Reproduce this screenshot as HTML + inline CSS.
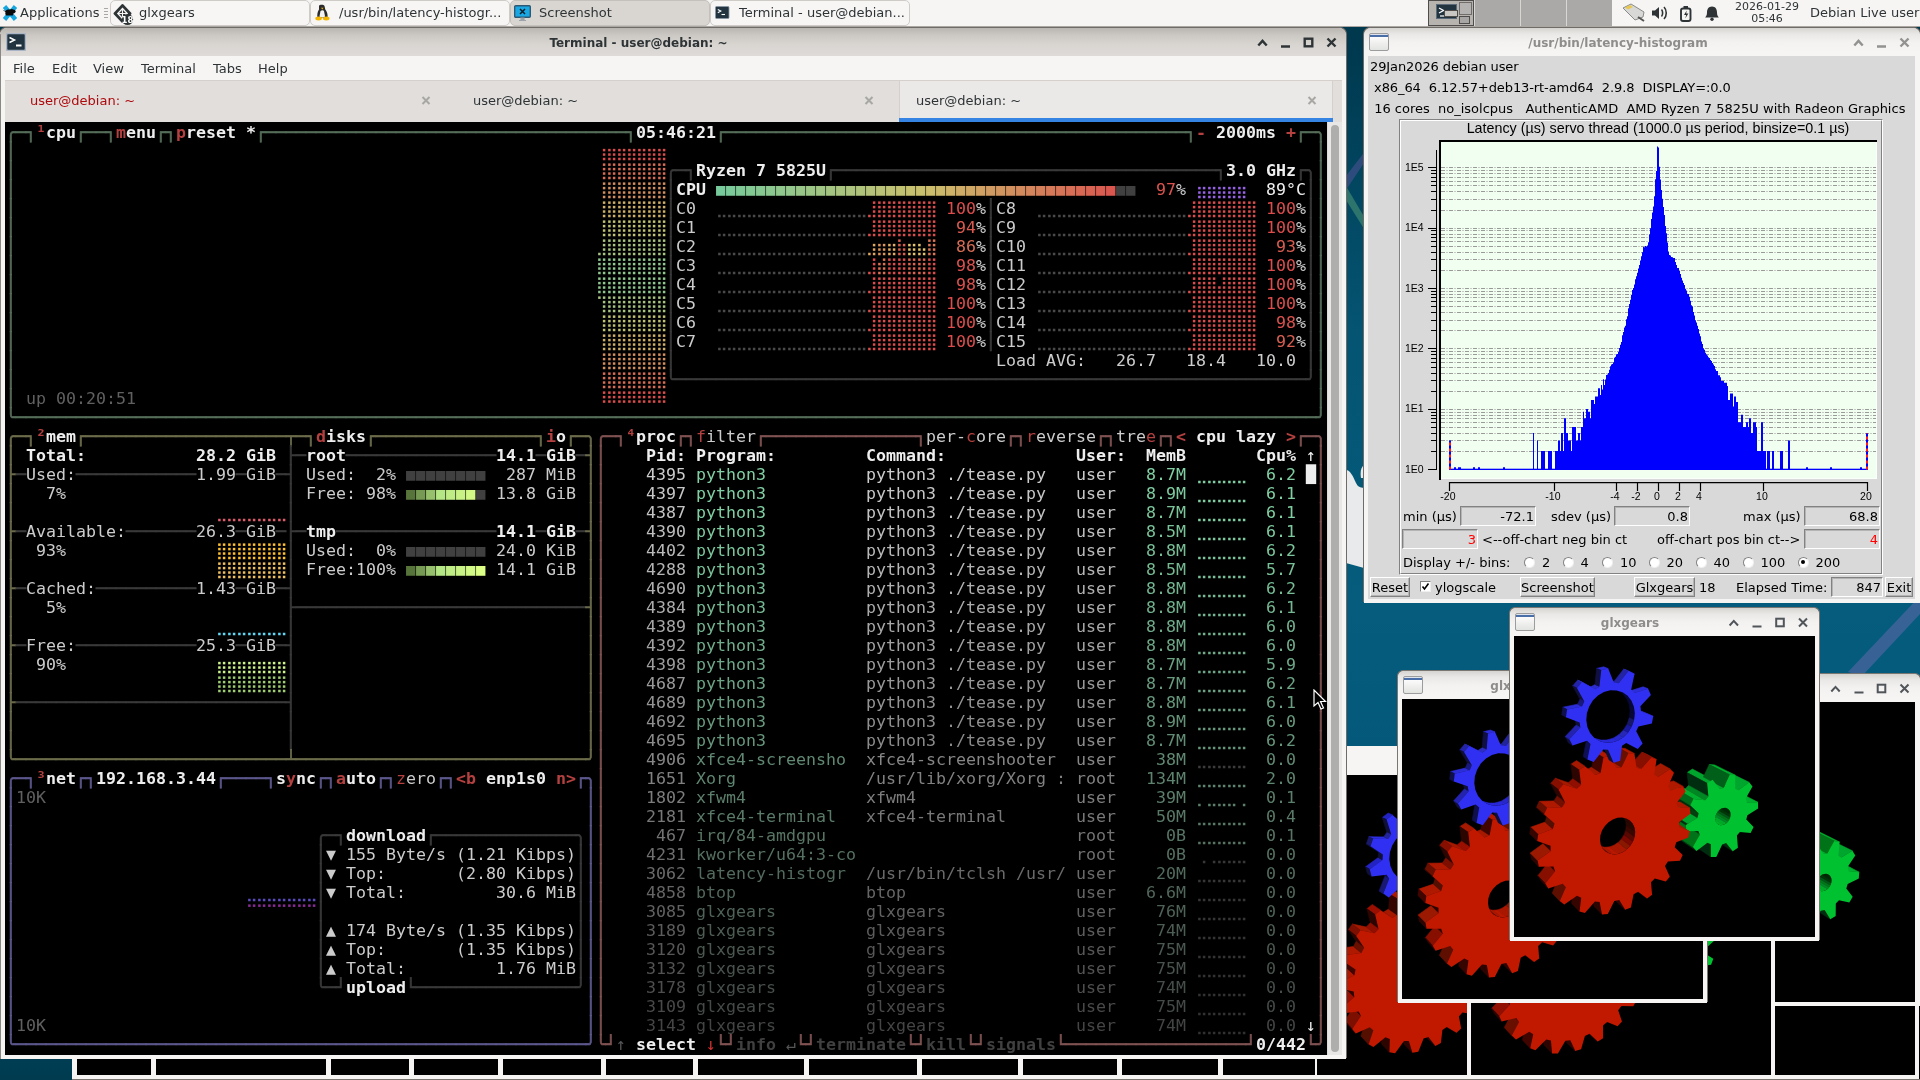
<!DOCTYPE html>
<html><head><meta charset="utf-8"><title>desktop</title><style>
html,body{margin:0;padding:0}
body{width:1920px;height:1080px;overflow:hidden;position:relative;background:#05587a;font:13px/16px "DejaVu Sans","Liberation Sans",sans-serif;color:#2e3436}
div,span,b,svg{box-sizing:border-box}
#all{position:absolute;left:0;top:0;width:1920px;height:1080px;will-change:transform}
.a,.a>*{position:absolute}
.t{white-space:pre;position:absolute}
#desk{left:0;top:0;width:1920px;height:1080px;background:linear-gradient(180deg,#00374c 0,#003a50 60px,#045472 330px,#055c7c 600px,#04597a 760px,#003b50 1080px)}
#panel{left:0;top:0;width:1920px;height:27px;background:#f6f5f4;border-bottom:1px solid #aaa6a2}
.tb{top:0;height:26px;border:1px solid #cfccc8;border-radius:5px;background:#f7f6f5}
.tb.act{background:#d9d6d2;border-color:#c4c1bc}
.tb .t{top:4px;font-size:13px}
.win{background:#f6f5f4;border-radius:7px 7px 0 0;overflow:hidden;box-shadow:-1px -1px 0 #6f6b67,1px -1px 0 #6f6b67}
.tbar{left:0;top:0;right:0;height:28px;background:linear-gradient(180deg,#b9b6b1 0,#cbc8c4 7px,#d8d5d1 16px,#dddad7 28px)}
.ttl{left:0;right:0;top:7px;text-align:center;font-weight:bold;font-size:12px;color:#2e3436;white-space:pre}
.ttl.in{color:#8e8d8b}
.term{left:5px;top:94px;width:1322px;height:933px;background:#000}
#term{left:1px;top:0;will-change:transform;font:16.61px/19px "DejaVu Sans Mono","Liberation Mono",monospace;color:#ccc;white-space:pre}
.tr{position:absolute;left:0;height:19px;white-space:pre}
.tr b{font-weight:bold}
.tr u{text-decoration:none;-webkit-text-stroke:.65px}
.mg{position:absolute;height:13px;background:repeating-linear-gradient(90deg,transparent 0,transparent 9px,rgba(0,0,0,.55) 9px,rgba(0,0,0,.55) 10px)}
#dots{left:1px;top:1px}
.tk{font-size:13px;color:#000;white-space:pre;position:absolute;line-height:16px}
.ent{position:absolute;background:#d9d9d9;border:1px solid;border-color:#828282 #fff #fff #828282;box-shadow:inset 1px 1px 0 #b4b4b4;height:20px;text-align:right;padding:2px 1px 0 0;font-size:13px;color:#000;line-height:16px}
.btn{position:absolute;background:#d9d9d9;border:1px solid;border-color:#fff #828282 #828282 #fff;box-shadow:inset -1px -1px 0 #b4b4b4;height:20px;font-size:13px;color:#000;line-height:16px;padding-top:2px;text-align:center}
.rad{position:absolute;width:11px;height:11px;border-radius:50%;background:#fff;border:1px solid;border-color:#828282 #efefef #efefef #828282}
.ax{font:10.500px "Liberation Sans",sans-serif;fill:#000}
.ct{font:14.3px "Liberation Sans",sans-serif;fill:#000}
.gw{background:#f6f5f4;border-radius:6px 6px 0 0;box-shadow:-1px -1px 0 #7a7672,1px -1px 0 #7a7672;overflow:hidden}
.gw .tbar{height:27px;background:linear-gradient(180deg,#d6d4d1 0,#e9e8e6 6px,#f3f2f1 14px,#f6f5f4 24px)}
.gl{position:absolute;background:#000}
.wi{position:absolute;width:20px;height:18px;border:1px solid #9a9c9e;border-radius:2px;background:linear-gradient(180deg,#dfe3ea 0,#dfe3ea 1px,#4a6ea8 1px,#4a6ea8 3px,#fbfbfb 3px,#e2e4e0 100%)}
</style></head><body><div id="all">
<div id="desk" class="a"></div>
<svg class="a" style="left:0;top:0" width="1920" height="1080"><path d="M1346 176L1366 150L1366 160L1346 190Z" fill="#40508a" opacity=".7"/><path d="M1346 186L1366 220L1366 232L1346 200Z" fill="#3f8870" opacity=".7"/><path d="M1346 470C1350 470 1353 476 1356 483C1358 487 1360 487.500 1364 488L1364 568L1346 563ZM1361 478C1360 472 1361 467 1364 465L1364 478Z" fill="#e8eaec"/><path d="M1920 596L1920 614L1862 676L1848 672Z" fill="#5a68a8" opacity=".6"/></svg>
<div class="a" style="left:72px;top:1059px;width:1280px;height:21px;background:#000"></div><div class="a" style="left:72px;top:1059px;width:5px;height:19px;background:#f6f5f4"></div><div class="a" style="left:151px;top:1059px;width:5px;height:19px;background:#f6f5f4"></div><div class="a" style="left:326px;top:1059px;width:5px;height:19px;background:#f6f5f4"></div><div class="a" style="left:409px;top:1059px;width:5px;height:19px;background:#f6f5f4"></div><div class="a" style="left:498px;top:1059px;width:5px;height:19px;background:#f6f5f4"></div><div class="a" style="left:601px;top:1059px;width:5px;height:19px;background:#f6f5f4"></div><div class="a" style="left:693px;top:1059px;width:5px;height:19px;background:#f6f5f4"></div><div class="a" style="left:804px;top:1059px;width:5px;height:19px;background:#f6f5f4"></div><div class="a" style="left:917px;top:1059px;width:5px;height:19px;background:#f6f5f4"></div><div class="a" style="left:1018px;top:1059px;width:5px;height:19px;background:#f6f5f4"></div><div class="a" style="left:1117px;top:1059px;width:5px;height:19px;background:#f6f5f4"></div><div class="a" style="left:1218px;top:1059px;width:5px;height:19px;background:#f6f5f4"></div><div class="a" style="left:1315px;top:1059px;width:5px;height:19px;background:#f6f5f4"></div><div class="a" style="left:72px;top:1075px;width:1275px;height:4px;background:#f6f5f4"></div><div class="a" style="left:72px;top:1079px;width:1275px;height:1px;background:#77736f"></div>
<div class="a" style="left:1340px;top:746px;width:140px;height:29px;background:#f6f5f4"></div>
<div class="a" style="left:1317px;top:775px;width:300px;height:300px;background:#000;overflow:hidden"><svg class="gl" width="300" height="300" viewBox="0 0 300 300"><path d="M244.0 174.1L233.8 171.6L213.2 160.4L223.2 162.9ZM227.8 141.2L222.8 139.5L202.0 129.2L206.9 130.9ZM195.3 159.6L184.6 155.6L164.9 144.4L175.4 148.5Z" fill="#00a52d" stroke="#00a52d" stroke-width=".6"/><path d="M239.3 151.7L228.1 157.2L207.4 146.4L218.4 141.2ZM214.8 151.3L210.9 151.6L190.5 140.8L194.4 140.6ZM205.9 140.5L200.2 142.9L179.9 132.3L185.5 130.1ZM185.0 175.9L172.7 180.5L153.5 168.5L165.4 164.1Z" fill="#00af2d" stroke="#00af2d" stroke-width=".6"/><path d="M222.8 139.5L214.8 151.3L194.4 140.6L202.0 129.2ZM184.6 155.6L180.5 161.2L160.9 149.9L164.9 144.4Z" fill="#007d23" stroke="#007d23" stroke-width=".6"/><path d="M200.2 142.9L199.0 156.7L178.9 145.6L179.9 132.3ZM180.5 161.2L186.8 171.4L167.1 159.8L160.9 149.9ZM172.7 180.5L171.9 187.2L152.8 174.9L153.5 168.5ZM183.2 189.6L184.0 193.8L164.6 181.4L163.9 177.3ZM175.1 205.1L177.9 209.9L158.8 197.0L156.0 192.3ZM189.6 204.0L192.5 206.2L173.1 193.5L170.2 191.3ZM207.1 208.6L211.9 218.7L192.1 205.8L187.4 196.0Z" fill="#002d0f" stroke="#002d0f" stroke-width=".6"/><path d="M199.0 156.7L195.3 159.6L175.4 148.5L178.9 145.6Z" fill="#009b23" stroke="#009b23" stroke-width=".6"/><path d="M186.8 171.4L185.0 175.9L165.4 164.1L167.1 159.8Z" fill="#005f19" stroke="#005f19" stroke-width=".6"/><path d="M184.0 193.8L175.1 205.1L156.0 192.3L164.6 181.4Z" fill="#008723" stroke="#008723" stroke-width=".6"/><path d="M192.5 206.2L190.3 219.4L171.0 206.3L173.1 193.5Z" fill="#00370f" stroke="#00370f" stroke-width=".6"/><clipPath id="hc1"><path d="M216.6 178.7L216.4 176.6L215.7 174.7L214.5 173.2L213.0 172.2L211.2 171.7L209.2 171.9L207.2 172.6L205.3 173.9L203.7 175.6L202.4 177.7L201.5 179.9L201.2 182.2L201.4 184.4L202.2 186.3L203.3 187.8L204.9 188.8L206.7 189.2L208.7 189.0L210.7 188.2L212.6 187.0L214.2 185.2L215.4 183.2L216.3 181.0Z"/></clipPath><g clip-path="url(#hc1)"><path d="M216.6 178.7L216.4 176.6L215.7 174.7L214.5 173.2L213.0 172.2L211.2 171.7L209.2 171.9L207.2 172.6L205.3 173.9L203.7 175.6L202.4 177.7L201.5 179.9L201.2 182.2L201.4 184.4L202.2 186.3L203.3 187.8L204.9 188.8L206.7 189.2L208.7 189.0L210.7 188.2L212.6 187.0L214.2 185.2L215.4 183.2L216.3 181.0Z" fill="#000"/><path d="M216.6 178.7L216.4 176.6L196.2 165.1L196.4 167.1ZM216.4 176.6L215.7 174.7L195.5 163.2L196.2 165.1ZM215.7 174.7L214.5 173.2L194.3 161.7L195.5 163.2ZM214.5 173.2L213.0 172.2L192.8 160.8L194.3 161.7Z" fill="#002808" stroke="#002808" stroke-width=".6"/><path d="M204.9 188.8L206.7 189.2L186.8 177.2L185.0 176.7ZM208.7 189.0L210.7 188.2L190.7 176.3L188.8 177.0ZM210.7 188.2L212.6 187.0L192.5 175.1L190.7 176.3Z" fill="#00a828" stroke="#00a828" stroke-width=".6"/><path d="M206.7 189.2L208.7 189.0L188.8 177.0L186.8 177.2Z" fill="#00b828" stroke="#00b828" stroke-width=".6"/><path d="M212.6 187.0L214.2 185.2L194.1 173.4L192.5 175.1Z" fill="#008828" stroke="#008828" stroke-width=".6"/><path d="M214.2 185.2L215.4 183.2L195.3 171.5L194.1 173.4Z" fill="#007818" stroke="#007818" stroke-width=".6"/><path d="M215.4 183.2L216.3 181.0L196.1 169.3L195.3 171.5Z" fill="#005818" stroke="#005818" stroke-width=".6"/><path d="M216.3 181.0L216.6 178.7L196.4 167.1L196.1 169.3Z" fill="#003808" stroke="#003808" stroke-width=".6"/></g><path d="M231.9 184.8L243.1 180.4L244.0 174.1L233.8 171.6L233.2 167.5L241.7 156.6L239.3 151.7L228.1 157.2L225.3 154.7L227.8 141.2L222.8 139.5L214.8 151.3L210.9 151.6L205.9 140.5L200.2 142.9L199.0 156.7L195.3 159.6L184.6 155.6L180.5 161.2L186.8 171.4L185.0 175.9L172.7 180.5L171.9 187.2L183.2 189.6L184.0 193.8L175.1 205.1L177.9 209.9L189.6 204.0L192.5 206.2L190.3 219.4L195.4 220.7L203.2 209.1L207.1 208.6L211.9 218.7L217.3 216.1L218.6 203.3L222.0 200.4L231.8 203.8L235.6 198.5L230.1 189.1ZM216.6 178.7L216.4 176.6L215.7 174.7L214.5 173.2L213.0 172.2L211.2 171.7L209.2 171.9L207.2 172.6L205.3 173.9L203.7 175.6L202.4 177.7L201.5 179.9L201.2 182.2L201.4 184.4L202.2 186.3L203.3 187.8L204.9 188.8L206.7 189.2L208.7 189.0L210.7 188.2L212.6 187.0L214.2 185.2L215.4 183.2L216.3 181.0Z" fill="#00c130" fill-rule="evenodd"/><path d="M174.5 164.8L162.2 165.7L152.6 159.8L164.7 159.0ZM165.8 144.3L153.3 149.4L143.7 143.8L156.0 138.9ZM121.2 131.5L116.3 131.0L107.1 125.6L112.0 126.1ZM112.7 117.3L106.5 117.7L97.4 112.5L103.5 112.1ZM100.8 132.2L95.6 133.5L86.8 127.9L91.9 126.7ZM87.7 122.1L81.5 124.6L72.8 119.2L78.9 116.7ZM44.3 178.1L29.3 180.1L21.6 173.4L36.4 171.5ZM37.4 200.2L23.0 206.9L15.6 199.6L29.7 193.1Z" fill="#af1900" stroke="#af1900" stroke-width=".6"/><path d="M150.7 128.5L139.3 137.5L129.8 132.1L141.1 123.3ZM63.7 135.2L58.1 139.6L49.9 133.8L55.3 129.4ZM37.3 221.9L25.2 232.4L17.8 224.7L29.7 214.4Z" fill="#9b0f00" stroke="#9b0f00" stroke-width=".6"/><path d="M139.3 137.5L135.1 135.4L125.7 130.0L129.8 132.1Z" fill="#9b1900" stroke="#9b1900" stroke-width=".6"/><path d="M135.9 120.8L130.4 119.2L121.0 114.0L126.4 115.7ZM80.2 139.9L75.2 142.8L66.7 137.0L71.6 134.1ZM57.4 158.2L43.4 155.3L35.4 149.0L49.3 152.0ZM176.4 187.9L165.3 184.8L155.8 178.6L166.7 181.7Z" fill="#a51900" stroke="#a51900" stroke-width=".6"/><path d="M130.4 119.2L121.2 131.5L112.0 126.1L121.0 114.0ZM43.4 155.3L39.2 161.1L31.3 154.8L35.4 149.0ZM43.9 240.9L35.2 253.9L27.7 245.8L36.2 233.1Z" fill="#7d0f00" stroke="#7d0f00" stroke-width=".6"/><path d="M106.5 117.7L100.8 132.2L91.9 126.7L97.4 112.5Z" fill="#5f0f00" stroke="#5f0f00" stroke-width=".6"/><path d="M81.5 124.6L80.2 139.9L71.6 134.1L72.8 119.2Z" fill="#370500" stroke="#370500" stroke-width=".6"/><path d="M58.1 139.6L61.5 153.9L53.3 147.8L49.9 133.8ZM39.2 161.1L47.1 172.8L39.1 166.3L31.3 154.8ZM27.0 186.8L38.5 194.6L30.7 187.6L19.4 179.9ZM23.0 206.9L22.8 213.5L15.4 206.1L15.6 199.6ZM36.7 216.6L37.3 221.9L29.7 214.4L29.0 209.2ZM25.2 232.4L27.0 238.2L19.6 230.4L17.8 224.7ZM41.7 236.5L43.9 240.9L36.2 233.1L34.0 228.8ZM35.2 253.9L38.8 258.4L31.3 250.3L27.7 245.8ZM52.7 252.2L56.3 255.3L48.5 247.4L45.0 244.3ZM51.6 269.3L56.5 272.0L48.8 263.8L43.9 261.0ZM72.8 263.9L72.4 277.3L64.5 269.1L64.8 255.9ZM91.8 266.0L95.4 277.8L87.2 269.7L83.6 258.1ZM111.4 261.9L118.4 270.9L109.8 263.1L102.9 254.1ZM129.8 252.0L139.5 257.7L130.6 250.2L121.0 244.6Z" fill="#2d0500" stroke="#2d0500" stroke-width=".6"/><path d="M61.5 153.9L57.4 158.2L49.3 152.0L53.3 147.8Z" fill="#910f00" stroke="#910f00" stroke-width=".6"/><path d="M47.1 172.8L44.3 178.1L36.4 171.5L39.1 166.3Z" fill="#690f00" stroke="#690f00" stroke-width=".6"/><path d="M29.3 180.1L27.0 186.8L19.4 179.9L21.6 173.4ZM56.3 255.3L51.6 269.3L43.9 261.0L48.5 247.4Z" fill="#550f00" stroke="#550f00" stroke-width=".6"/><path d="M38.5 194.6L37.4 200.2L29.7 193.1L30.7 187.6Z" fill="#410500" stroke="#410500" stroke-width=".6"/><clipPath id="hc2"><path d="M121.2 196.1L120.5 191.6L118.7 187.6L115.9 184.5L112.2 182.4L108.0 181.4L103.4 181.8L98.8 183.4L94.5 186.2L90.9 189.9L88.1 194.3L86.4 199.2L86.0 204.0L86.7 208.6L88.7 212.5L91.6 215.6L95.3 217.6L99.6 218.4L104.2 217.9L108.7 216.2L112.8 213.5L116.3 209.8L119.0 205.5L120.7 200.8Z"/></clipPath><g clip-path="url(#hc2)"><path d="M121.2 196.1L120.5 191.6L118.7 187.6L115.9 184.5L112.2 182.4L108.0 181.4L103.4 181.8L98.8 183.4L94.5 186.2L90.9 189.9L88.1 194.3L86.4 199.2L86.0 204.0L86.7 208.6L88.7 212.5L91.6 215.6L95.3 217.6L99.6 218.4L104.2 217.9L108.7 216.2L112.8 213.5L116.3 209.8L119.0 205.5L120.7 200.8Z" fill="#000"/><path d="M121.2 196.1L120.5 191.6L111.6 185.1L112.2 189.5ZM120.5 191.6L118.7 187.6L109.8 181.2L111.6 185.1ZM118.7 187.6L115.9 184.5L107.0 178.1L109.8 181.2ZM115.9 184.5L112.2 182.4L103.4 176.0L107.0 178.1Z" fill="#280800" stroke="#280800" stroke-width=".6"/><path d="M95.3 217.6L99.6 218.4L91.1 211.3L86.8 210.5ZM104.2 217.9L108.7 216.2L100.0 209.2L95.6 210.9ZM108.7 216.2L112.8 213.5L104.1 206.6L100.0 209.2Z" fill="#a81800" stroke="#a81800" stroke-width=".6"/><path d="M99.6 218.4L104.2 217.9L95.6 210.9L91.1 211.3Z" fill="#b81800" stroke="#b81800" stroke-width=".6"/><path d="M112.8 213.5L116.3 209.8L107.5 203.0L104.1 206.6Z" fill="#881800" stroke="#881800" stroke-width=".6"/><path d="M116.3 209.8L119.0 205.5L110.1 198.8L107.5 203.0Z" fill="#780800" stroke="#780800" stroke-width=".6"/><path d="M119.0 205.5L120.7 200.8L111.7 194.2L110.1 198.8Z" fill="#580800" stroke="#580800" stroke-width=".6"/><path d="M120.7 200.8L121.2 196.1L112.2 189.5L111.7 194.2Z" fill="#380800" stroke="#380800" stroke-width=".6"/></g><path d="M165.1 179.8L175.6 170.4L174.5 164.8L162.2 165.7L160.5 161.3L168.6 149.1L165.8 144.3L153.3 149.4L150.2 145.9L155.0 131.9L150.7 128.5L139.3 137.5L135.1 135.4L135.9 120.8L130.4 119.2L121.2 131.5L116.3 131.0L112.7 117.3L106.5 117.7L100.8 132.2L95.6 133.5L87.7 122.1L81.5 124.6L80.2 139.9L75.2 142.8L63.7 135.2L58.1 139.6L61.5 153.9L57.4 158.2L43.4 155.3L39.2 161.1L47.1 172.8L44.3 178.1L29.3 180.1L27.0 186.8L38.5 194.6L37.4 200.2L23.0 206.9L22.8 213.5L36.7 216.6L37.3 221.9L25.2 232.4L27.0 238.2L41.7 236.5L43.9 240.9L35.2 253.9L38.8 258.4L52.7 252.2L56.3 255.3L51.6 269.3L56.5 272.0L68.4 262.3L72.8 263.9L72.4 277.3L78.1 278.2L87.0 266.1L91.8 266.0L95.4 277.8L101.3 276.7L106.6 263.5L111.4 261.9L118.4 270.9L123.9 268.1L125.4 255.0L129.8 252.0L139.5 257.7L144.2 253.5L141.9 241.5L145.4 237.5L156.9 239.3L160.5 234.1L154.6 224.4L157.1 219.6L169.3 217.5L171.5 211.7L162.7 204.9L163.9 199.9L175.8 193.9L176.4 187.9L165.3 184.8ZM121.2 196.1L120.5 191.6L118.7 187.6L115.9 184.5L112.2 182.4L108.0 181.4L103.4 181.8L98.8 183.4L94.5 186.2L90.9 189.9L88.1 194.3L86.4 199.2L86.0 204.0L86.7 208.6L88.7 212.5L91.6 215.6L95.3 217.6L99.6 218.4L104.2 217.9L108.7 216.2L112.8 213.5L116.3 209.8L119.0 205.5L120.7 200.8Z" fill="#c11800" fill-rule="evenodd"/><path d="M137.4 60.9L123.8 62.2L119.0 60.1L132.6 58.9ZM103.1 32.2L96.1 32.3L91.5 30.5L98.4 30.5ZM71.1 64.1L56.1 63.8L51.8 61.7L66.7 61.9Z" fill="#2d2de1" stroke="#2d2de1" stroke-width=".6"/><path d="M122.0 39.0L110.4 49.1L105.7 47.2L117.2 37.1Z" fill="#2323b9" stroke="#2323b9" stroke-width=".6"/><path d="M110.4 49.1L106.0 47.6L101.3 45.6L105.7 47.2ZM91.5 47.9L86.7 49.7L82.2 47.7L86.9 46.0Z" fill="#2d2dd7" stroke="#2d2dd7" stroke-width=".6"/><path d="M96.1 32.3L91.5 47.9L86.9 46.0L91.5 30.5ZM56.1 63.8L53.5 71.3L49.3 69.1L51.8 61.7Z" fill="#191969" stroke="#191969" stroke-width=".6"/><path d="M75.6 39.9L69.6 44.6L65.2 42.6L71.2 38.0ZM65.5 84.9L52.7 94.3L48.5 91.8L61.2 82.6Z" fill="#2323c3" stroke="#2323c3" stroke-width=".6"/><path d="M69.6 44.6L74.2 59.6L69.8 57.5L65.2 42.6ZM53.5 71.3L65.8 79.6L61.5 77.2L49.3 69.1ZM65.8 79.6L65.5 84.9L61.2 82.6L61.5 77.2ZM52.7 94.3L54.6 101.4L50.4 98.8L48.5 91.8ZM69.5 99.7L72.2 103.8L67.9 101.2L65.2 97.2ZM66.4 118.6L71.8 122.5L67.6 119.7L62.1 115.9ZM88.0 113.3L91.0 127.6L86.6 124.9L83.6 110.7ZM106.8 110.4L116.9 119.0L112.3 116.3L102.2 107.9Z" fill="#0f0f37" stroke="#0f0f37" stroke-width=".6"/><path d="M74.2 59.6L71.1 64.1L66.7 61.9L69.8 57.5Z" fill="#23239b" stroke="#23239b" stroke-width=".6"/><path d="M72.2 103.8L66.4 118.6L62.1 115.9L67.9 101.2Z" fill="#191973" stroke="#191973" stroke-width=".6"/><clipPath id="hc3"><path d="M120.8 77.3L119.9 70.7L117.4 64.8L113.6 59.8L108.5 56.3L102.6 54.4L96.3 54.2L89.9 55.9L84.0 59.4L79.0 64.3L75.2 70.4L72.9 77.2L72.3 84.2L73.4 91.0L76.1 96.9L80.2 101.7L85.4 105.0L91.3 106.7L97.6 106.6L103.7 104.7L109.4 101.2L114.2 96.4L117.8 90.6L120.1 84.1Z"/></clipPath><g clip-path="url(#hc3)"><path d="M120.8 77.3L119.9 70.7L117.4 64.8L113.6 59.8L108.5 56.3L102.6 54.4L96.3 54.2L89.9 55.9L84.0 59.4L79.0 64.3L75.2 70.4L72.9 77.2L72.3 84.2L73.4 91.0L76.1 96.9L80.2 101.7L85.4 105.0L91.3 106.7L97.6 106.6L103.7 104.7L109.4 101.2L114.2 96.4L117.8 90.6L120.1 84.1Z" fill="#000"/><path d="M120.8 77.3L119.9 70.7L115.1 68.6L116.0 75.1ZM119.9 70.7L117.4 64.8L112.7 62.7L115.1 68.6ZM117.4 64.8L113.6 59.8L108.8 57.8L112.7 62.7ZM113.6 59.8L108.5 56.3L103.8 54.3L108.8 57.8ZM120.1 84.1L120.8 77.3L116.0 75.1L115.3 81.8Z" fill="#080838" stroke="#080838" stroke-width=".6"/><path d="M85.4 105.0L91.3 106.7L86.9 104.1L81.0 102.5ZM91.3 106.7L97.6 106.6L93.1 104.0L86.9 104.1ZM97.6 106.6L103.7 104.7L99.2 102.2L93.1 104.0Z" fill="#2828d8" stroke="#2828d8" stroke-width=".6"/><path d="M103.7 104.7L109.4 101.2L104.8 98.8L99.2 102.2Z" fill="#2828c8" stroke="#2828c8" stroke-width=".6"/><path d="M109.4 101.2L114.2 96.4L109.5 94.0L104.8 98.8Z" fill="#2828b8" stroke="#2828b8" stroke-width=".6"/><path d="M114.2 96.4L117.8 90.6L113.1 88.2L109.5 94.0Z" fill="#181898" stroke="#181898" stroke-width=".6"/><path d="M117.8 90.6L120.1 84.1L115.3 81.8L113.1 88.2Z" fill="#181868" stroke="#181868" stroke-width=".6"/></g><path d="M121.5 96.5L134.9 96.4L137.4 89.4L126.7 81.8L127.0 76.7L139.0 67.8L137.4 60.9L123.8 62.2L121.3 58.0L127.1 43.3L122.0 39.0L110.4 49.1L106.0 47.6L103.1 32.2L96.1 32.3L91.5 47.9L86.7 49.7L75.6 39.9L69.6 44.6L74.2 59.6L71.1 64.1L56.1 63.8L53.5 71.3L65.8 79.6L65.5 84.9L52.7 94.3L54.6 101.4L69.5 99.7L72.2 103.8L66.4 118.6L71.8 122.5L83.5 112.1L88.0 113.3L91.0 127.6L97.7 127.0L102.2 112.3L106.8 110.4L116.9 119.0L122.4 114.4L118.5 100.8ZM120.8 77.3L119.9 70.7L117.4 64.8L113.6 59.8L108.5 56.3L102.6 54.4L96.3 54.2L89.9 55.9L84.0 59.4L79.0 64.3L75.2 70.4L72.9 77.2L72.3 84.2L73.4 91.0L76.1 96.9L80.2 101.7L85.4 105.0L91.3 106.7L97.6 106.6L103.7 104.7L109.4 101.2L114.2 96.4L117.8 90.6L120.1 84.1Z" fill="#3030f2" fill-rule="evenodd"/></svg></div>
<div class="a" style="left:1340px;top:1075px;width:130px;height:4px;background:#f6f5f4"></div>
<div class="a" style="left:1773px;top:1004px;width:147px;height:76px;background:#000"></div><div class="a" style="left:1915px;top:1004px;width:4px;height:75px;background:#f6f5f4"></div><div class="a" style="left:1773px;top:1075px;width:146px;height:4px;background:#f6f5f4"></div><div class="a" style="left:1773px;top:1079px;width:147px;height:1px;background:#77736f"></div>
<div class="a gw" style="left:1611px;top:674px;width:309px;height:332px"><div class="tbar"></div><svg class="a" style="left:0;top:0" width="309" height="27"><path d="M220.3 17.5l4.2 -4.6l4.2 4.6" fill="none" stroke="#50555a" stroke-width="2.0"/><path d="M243.5 18.5h9" fill="none" stroke="#50555a" stroke-width="2.0"/><rect x="266.7" y="10.7" width="7.6" height="7.6" fill="none" stroke="#50555a" stroke-width="2.0"/><path d="M289.5 10.5l8 8m0 -8l-8 8" fill="none" stroke="#50555a" stroke-width="2.0"/></svg></div>
<div class="a" style="left:1615px;top:702px;width:300px;height:300px;background:#000;overflow:hidden"><svg class="gl" width="300" height="300" viewBox="0 0 300 300"><path d="M244.2 170.2L233.5 169.0L212.8 157.9L223.3 159.1ZM224.6 140.0L219.4 138.9L198.7 128.7L203.9 129.7ZM212.3 151.4L208.3 152.1L188.0 141.4L191.9 140.7ZM184.1 178.8L172.1 184.8L152.9 172.6L164.6 166.9Z" fill="#00af2d" stroke="#00af2d" stroke-width=".6"/><path d="M237.4 148.8L226.4 155.6L205.7 144.8L216.4 138.4ZM202.2 141.9L196.6 144.9L176.5 134.3L182.0 131.4ZM193.2 161.8L181.9 159.1L162.2 147.9L173.3 150.6Z" fill="#00a52d" stroke="#00a52d" stroke-width=".6"/><path d="M219.4 138.9L212.3 151.4L191.9 140.7L198.7 128.7ZM181.9 159.1L178.2 165.1L158.7 153.6L162.2 147.9Z" fill="#007319" stroke="#007319" stroke-width=".6"/><path d="M196.6 144.9L196.6 158.5L176.6 147.4L176.5 134.3ZM178.2 165.1L185.5 174.2L166.0 162.5L158.7 153.6ZM172.1 184.8L171.9 191.3L152.8 178.9L152.9 172.6ZM183.6 192.3L184.7 196.3L165.4 183.9L164.3 180.0ZM176.8 208.3L180.0 212.6L160.9 199.6L157.7 195.3ZM194.6 207.4L193.5 220.4L174.2 207.2L175.1 194.6ZM209.6 208.0L215.3 217.2L195.5 204.4L189.8 195.4Z" fill="#002d0f" stroke="#002d0f" stroke-width=".6"/><path d="M196.6 158.5L193.2 161.8L173.3 150.6L176.6 147.4Z" fill="#009123" stroke="#009123" stroke-width=".6"/><path d="M185.5 174.2L184.1 178.8L164.6 166.9L166.0 162.5Z" fill="#004b0f" stroke="#004b0f" stroke-width=".6"/><path d="M184.7 196.3L176.8 208.3L157.7 195.3L165.4 183.9Z" fill="#007d23" stroke="#007d23" stroke-width=".6"/><clipPath id="hc4"><path d="M216.6 178.7L216.4 176.6L215.7 174.7L214.5 173.2L213.0 172.2L211.2 171.7L209.2 171.9L207.2 172.6L205.3 173.9L203.7 175.6L202.4 177.7L201.5 179.9L201.2 182.2L201.4 184.4L202.2 186.3L203.3 187.8L204.9 188.8L206.7 189.2L208.7 189.0L210.7 188.2L212.6 187.0L214.2 185.2L215.4 183.2L216.3 181.0Z"/></clipPath><g clip-path="url(#hc4)"><path d="M216.6 178.7L216.4 176.6L215.7 174.7L214.5 173.2L213.0 172.2L211.2 171.7L209.2 171.9L207.2 172.6L205.3 173.9L203.7 175.6L202.4 177.7L201.5 179.9L201.2 182.2L201.4 184.4L202.2 186.3L203.3 187.8L204.9 188.8L206.7 189.2L208.7 189.0L210.7 188.2L212.6 187.0L214.2 185.2L215.4 183.2L216.3 181.0Z" fill="#000"/><path d="M216.6 178.7L216.4 176.6L196.2 165.1L196.4 167.1ZM216.4 176.6L215.7 174.7L195.5 163.2L196.2 165.1ZM215.7 174.7L214.5 173.2L194.3 161.7L195.5 163.2ZM214.5 173.2L213.0 172.2L192.8 160.8L194.3 161.7Z" fill="#002808" stroke="#002808" stroke-width=".6"/><path d="M204.9 188.8L206.7 189.2L186.8 177.2L185.0 176.7ZM208.7 189.0L210.7 188.2L190.7 176.3L188.8 177.0ZM210.7 188.2L212.6 187.0L192.5 175.1L190.7 176.3Z" fill="#00a828" stroke="#00a828" stroke-width=".6"/><path d="M206.7 189.2L208.7 189.0L188.8 177.0L186.8 177.2Z" fill="#00b828" stroke="#00b828" stroke-width=".6"/><path d="M212.6 187.0L214.2 185.2L194.1 173.4L192.5 175.1Z" fill="#008828" stroke="#008828" stroke-width=".6"/><path d="M214.2 185.2L215.4 183.2L195.3 171.5L194.1 173.4Z" fill="#007818" stroke="#007818" stroke-width=".6"/><path d="M215.4 183.2L216.3 181.0L196.1 169.3L195.3 171.5Z" fill="#005818" stroke="#005818" stroke-width=".6"/><path d="M216.3 181.0L216.6 178.7L196.4 167.1L196.1 169.3Z" fill="#003808" stroke="#003808" stroke-width=".6"/></g><path d="M232.7 182.0L243.8 176.4L244.2 170.2L233.5 169.0L232.6 165.0L240.3 153.4L237.4 148.8L226.4 155.6L223.4 153.5L224.6 140.0L219.4 138.9L212.3 151.4L208.3 152.1L202.2 141.9L196.6 144.9L196.6 158.5L193.2 161.8L181.9 159.1L178.2 165.1L185.5 174.2L184.1 178.8L172.1 184.8L171.9 191.3L183.6 192.3L184.7 196.3L176.8 208.3L180.0 212.6L191.4 205.5L194.6 207.4L193.5 220.4L198.8 221.0L205.7 208.8L209.6 208.0L215.3 217.2L220.7 214.1L220.8 201.5L224.0 198.3L234.3 200.5L237.7 194.8L231.3 186.4ZM216.6 178.7L216.4 176.6L215.7 174.7L214.5 173.2L213.0 172.2L211.2 171.7L209.2 171.9L207.2 172.6L205.3 173.9L203.7 175.6L202.4 177.7L201.5 179.9L201.2 182.2L201.4 184.4L202.2 186.3L203.3 187.8L204.9 188.8L206.7 189.2L208.7 189.0L210.7 188.2L212.6 187.0L214.2 185.2L215.4 183.2L216.3 181.0Z" fill="#00c130" fill-rule="evenodd"/><path d="M175.2 168.3L163.0 168.6L153.5 162.7L165.5 162.5ZM167.6 147.3L155.0 151.7L145.5 146.1L157.9 141.8ZM124.3 132.0L119.4 131.3L110.2 125.8L115.0 126.6ZM116.5 117.3L110.4 117.4L101.3 112.2L107.3 112.1ZM104.1 131.6L98.9 132.6L90.0 127.1L95.2 126.1ZM91.7 120.8L85.4 123.0L76.7 117.6L82.8 115.4ZM46.0 174.7L31.0 176.0L23.3 169.3L38.1 168.2ZM38.0 196.6L23.5 202.6L16.0 195.4L30.3 189.6Z" fill="#af1900" stroke="#af1900" stroke-width=".6"/><path d="M153.5 130.7L141.8 139.1L132.3 133.6L143.9 125.4ZM67.3 132.6L61.6 136.7L53.3 131.0L58.9 126.9Z" fill="#9b1900" stroke="#9b1900" stroke-width=".6"/><path d="M139.2 122.1L133.9 120.2L124.5 115.0L129.7 117.0ZM83.4 138.2L78.3 140.9L69.8 135.1L74.7 132.5ZM60.0 155.4L46.2 151.7L38.2 145.5L51.8 149.3ZM176.0 191.7L165.3 187.9L155.8 181.7L166.4 185.5Z" fill="#a51900" stroke="#a51900" stroke-width=".6"/><path d="M133.9 120.2L124.3 132.0L115.0 126.6L124.5 115.0ZM46.2 151.7L41.8 157.4L33.9 151.1L38.2 145.5Z" fill="#870f00" stroke="#870f00" stroke-width=".6"/><path d="M110.4 117.4L104.1 131.6L95.2 126.1L101.3 112.2ZM31.0 176.0L28.4 182.5L20.8 175.7L23.3 169.3ZM54.0 253.4L48.7 267.3L41.0 259.1L46.2 245.5Z" fill="#5f0f00" stroke="#5f0f00" stroke-width=".6"/><path d="M85.4 123.0L83.4 138.2L74.7 132.5L76.7 117.6ZM23.5 202.6L22.9 209.3L15.5 202.0L16.0 195.4Z" fill="#370500" stroke="#370500" stroke-width=".6"/><path d="M61.6 136.7L64.3 151.3L56.0 145.2L53.3 131.0ZM41.8 157.4L49.0 169.6L41.0 163.1L33.9 151.1ZM28.4 182.5L39.4 191.0L31.6 184.1L20.8 175.7ZM36.5 213.2L36.8 218.6L29.2 211.1L28.8 205.9ZM24.3 228.5L25.8 234.6L18.4 226.8L16.9 220.9ZM40.4 233.6L42.4 238.2L34.8 230.4L32.8 225.9ZM33.1 250.8L36.5 255.6L29.0 247.5L25.7 242.8ZM50.6 250.1L54.0 253.4L46.2 245.5L42.9 242.2ZM48.7 267.3L53.4 270.3L45.7 262.1L41.0 259.1ZM70.0 262.9L68.9 276.6L61.0 268.3L62.0 254.9ZM88.7 266.1L91.7 278.2L83.5 270.1L80.5 258.2ZM108.3 262.9L114.9 272.4L106.3 264.6L99.8 255.2ZM127.0 254.0L136.3 260.1L127.5 252.6L118.2 246.4Z" fill="#2d0500" stroke="#2d0500" stroke-width=".6"/><path d="M64.3 151.3L60.0 155.4L51.8 149.3L56.0 145.2Z" fill="#910f00" stroke="#910f00" stroke-width=".6"/><path d="M49.0 169.6L46.0 174.7L38.1 168.2L41.0 163.1Z" fill="#730f00" stroke="#730f00" stroke-width=".6"/><path d="M39.4 191.0L38.0 196.6L30.3 189.6L31.6 184.1Z" fill="#4b0500" stroke="#4b0500" stroke-width=".6"/><path d="M36.8 218.6L24.3 228.5L16.9 220.9L29.2 211.1Z" fill="#9b0f00" stroke="#9b0f00" stroke-width=".6"/><path d="M42.4 238.2L33.1 250.8L25.7 242.8L34.8 230.4Z" fill="#7d0f00" stroke="#7d0f00" stroke-width=".6"/><clipPath id="hc5"><path d="M121.2 196.1L120.5 191.6L118.7 187.6L115.9 184.5L112.2 182.4L108.0 181.4L103.4 181.8L98.8 183.4L94.5 186.2L90.9 189.9L88.1 194.3L86.4 199.2L86.0 204.0L86.7 208.6L88.7 212.5L91.6 215.6L95.3 217.6L99.6 218.4L104.2 217.9L108.7 216.2L112.8 213.5L116.3 209.8L119.0 205.5L120.7 200.8Z"/></clipPath><g clip-path="url(#hc5)"><path d="M121.2 196.1L120.5 191.6L118.7 187.6L115.9 184.5L112.2 182.4L108.0 181.4L103.4 181.8L98.8 183.4L94.5 186.2L90.9 189.9L88.1 194.3L86.4 199.2L86.0 204.0L86.7 208.6L88.7 212.5L91.6 215.6L95.3 217.6L99.6 218.4L104.2 217.9L108.7 216.2L112.8 213.5L116.3 209.8L119.0 205.5L120.7 200.8Z" fill="#000"/><path d="M121.2 196.1L120.5 191.6L111.6 185.1L112.2 189.5ZM120.5 191.6L118.7 187.6L109.8 181.2L111.6 185.1ZM118.7 187.6L115.9 184.5L107.0 178.1L109.8 181.2ZM115.9 184.5L112.2 182.4L103.4 176.0L107.0 178.1Z" fill="#280800" stroke="#280800" stroke-width=".6"/><path d="M95.3 217.6L99.6 218.4L91.1 211.3L86.8 210.5ZM104.2 217.9L108.7 216.2L100.0 209.2L95.6 210.9ZM108.7 216.2L112.8 213.5L104.1 206.6L100.0 209.2Z" fill="#a81800" stroke="#a81800" stroke-width=".6"/><path d="M99.6 218.4L104.2 217.9L95.6 210.9L91.1 211.3Z" fill="#b81800" stroke="#b81800" stroke-width=".6"/><path d="M112.8 213.5L116.3 209.8L107.5 203.0L104.1 206.6Z" fill="#881800" stroke="#881800" stroke-width=".6"/><path d="M116.3 209.8L119.0 205.5L110.1 198.8L107.5 203.0Z" fill="#780800" stroke="#780800" stroke-width=".6"/><path d="M119.0 205.5L120.7 200.8L111.7 194.2L110.1 198.8Z" fill="#580800" stroke="#580800" stroke-width=".6"/><path d="M120.7 200.8L121.2 196.1L112.2 189.5L111.7 194.2Z" fill="#380800" stroke="#380800" stroke-width=".6"/></g><path d="M165.3 183.0L176.1 174.0L175.2 168.3L163.0 168.6L161.6 164.1L170.2 152.2L167.6 147.3L155.0 151.7L152.2 148.1L157.6 134.3L153.5 130.7L141.8 139.1L137.8 136.7L139.2 122.1L133.9 120.2L124.3 132.0L119.4 131.3L116.5 117.3L110.4 117.4L104.1 131.6L98.9 132.6L91.7 120.8L85.4 123.0L83.4 138.2L78.3 140.9L67.3 132.6L61.6 136.7L64.3 151.3L60.0 155.4L46.2 151.7L41.8 157.4L49.0 169.6L46.0 174.7L31.0 176.0L28.4 182.5L39.4 191.0L38.0 196.6L23.5 202.6L22.9 209.3L36.5 213.2L36.8 218.6L24.3 228.5L25.8 234.6L40.4 233.6L42.4 238.2L33.1 250.8L36.5 255.6L50.6 250.1L54.0 253.4L48.7 267.3L53.4 270.3L65.7 261.1L70.0 262.9L68.9 276.6L74.5 277.7L83.9 265.9L88.7 266.1L91.7 278.2L97.6 277.4L103.4 264.3L108.3 262.9L114.9 272.4L120.5 269.9L122.5 256.7L127.0 254.0L136.3 260.1L141.2 256.2L139.4 244.0L143.2 240.1L154.4 242.5L158.2 237.5L152.9 227.3L155.6 222.7L167.7 221.1L170.2 215.4L161.8 208.1L163.2 203.1L175.2 197.7L176.0 191.7L165.3 187.9ZM121.2 196.1L120.5 191.6L118.7 187.6L115.9 184.5L112.2 182.4L108.0 181.4L103.4 181.8L98.8 183.4L94.5 186.2L90.9 189.9L88.1 194.3L86.4 199.2L86.0 204.0L86.7 208.6L88.7 212.5L91.6 215.6L95.3 217.6L99.6 218.4L104.2 217.9L108.7 216.2L112.8 213.5L116.3 209.8L119.0 205.5L120.7 200.8Z" fill="#c11800" fill-rule="evenodd"/><path d="M138.5 84.9L127.0 78.5L122.2 76.3L133.6 82.6Z" fill="#2d2dc3" stroke="#2d2dc3" stroke-width=".6"/><path d="M136.0 56.7L122.3 59.5L117.5 57.4L131.1 54.8ZM107.6 48.0L103.0 47.0L98.3 45.1L102.9 46.1Z" fill="#2d2dd7" stroke="#2d2dd7" stroke-width=".6"/><path d="M118.4 36.7L107.6 48.0L102.9 46.1L113.6 34.9Z" fill="#2323af" stroke="#2323af" stroke-width=".6"/><path d="M98.7 32.2L91.6 33.0L87.0 31.2L94.0 30.4ZM69.4 67.2L54.3 68.6L50.1 66.4L65.0 65.0Z" fill="#2d2de1" stroke="#2d2de1" stroke-width=".6"/><path d="M91.6 33.0L88.4 49.0L83.9 47.0L87.0 31.2Z" fill="#0f0f55" stroke="#0f0f55" stroke-width=".6"/><path d="M88.4 49.0L83.8 51.3L79.3 49.3L83.9 47.0Z" fill="#2d2dcd" stroke="#2d2dcd" stroke-width=".6"/><path d="M71.7 42.8L66.1 48.1L61.7 46.1L67.3 40.8ZM65.8 88.3L53.8 98.9L49.6 96.3L61.5 85.9Z" fill="#2323b9" stroke="#2323b9" stroke-width=".6"/><path d="M66.1 48.1L72.1 62.4L67.7 60.3L61.7 46.1ZM65.5 83.0L65.8 88.3L61.5 85.9L61.2 80.6ZM53.8 98.9L56.4 105.6L52.2 103.0L49.6 96.3ZM71.1 102.4L74.2 106.1L69.9 103.5L66.8 99.8ZM91.0 113.7L95.3 127.4L90.8 124.6L86.6 111.1Z" fill="#0f0f37" stroke="#0f0f37" stroke-width=".6"/><path d="M72.1 62.4L69.4 67.2L65.0 65.0L67.7 60.3Z" fill="#191991" stroke="#191991" stroke-width=".6"/><path d="M54.3 68.6L52.5 76.2L48.3 73.9L50.1 66.4Z" fill="#0f0f5f" stroke="#0f0f5f" stroke-width=".6"/><path d="M74.2 106.1L69.8 121.2L65.5 118.4L69.9 103.5Z" fill="#19195f" stroke="#19195f" stroke-width=".6"/><clipPath id="hc6"><path d="M120.8 77.3L119.9 70.7L117.4 64.8L113.6 59.8L108.5 56.3L102.6 54.4L96.3 54.2L89.9 55.9L84.0 59.4L79.0 64.3L75.2 70.4L72.9 77.2L72.3 84.2L73.4 91.0L76.1 96.9L80.2 101.7L85.4 105.0L91.3 106.7L97.6 106.6L103.7 104.7L109.4 101.2L114.2 96.4L117.8 90.6L120.1 84.1Z"/></clipPath><g clip-path="url(#hc6)"><path d="M120.8 77.3L119.9 70.7L117.4 64.8L113.6 59.8L108.5 56.3L102.6 54.4L96.3 54.2L89.9 55.9L84.0 59.4L79.0 64.3L75.2 70.4L72.9 77.2L72.3 84.2L73.4 91.0L76.1 96.9L80.2 101.7L85.4 105.0L91.3 106.7L97.6 106.6L103.7 104.7L109.4 101.2L114.2 96.4L117.8 90.6L120.1 84.1Z" fill="#000"/><path d="M120.8 77.3L119.9 70.7L115.1 68.6L116.0 75.1ZM119.9 70.7L117.4 64.8L112.7 62.7L115.1 68.6ZM117.4 64.8L113.6 59.8L108.8 57.8L112.7 62.7ZM113.6 59.8L108.5 56.3L103.8 54.3L108.8 57.8ZM120.1 84.1L120.8 77.3L116.0 75.1L115.3 81.8Z" fill="#080838" stroke="#080838" stroke-width=".6"/><path d="M85.4 105.0L91.3 106.7L86.9 104.1L81.0 102.5ZM91.3 106.7L97.6 106.6L93.1 104.0L86.9 104.1ZM97.6 106.6L103.7 104.7L99.2 102.2L93.1 104.0Z" fill="#2828d8" stroke="#2828d8" stroke-width=".6"/><path d="M103.7 104.7L109.4 101.2L104.8 98.8L99.2 102.2Z" fill="#2828c8" stroke="#2828c8" stroke-width=".6"/><path d="M109.4 101.2L114.2 96.4L109.5 94.0L104.8 98.8Z" fill="#2828b8" stroke="#2828b8" stroke-width=".6"/><path d="M114.2 96.4L117.8 90.6L113.1 88.2L109.5 94.0Z" fill="#181898" stroke="#181898" stroke-width=".6"/><path d="M117.8 90.6L120.1 84.1L115.3 81.8L113.1 88.2Z" fill="#181868" stroke="#181868" stroke-width=".6"/></g><path d="M123.1 93.6L136.6 92.0L138.5 84.9L127.0 78.5L126.9 73.4L138.1 63.4L136.0 56.7L122.3 59.5L119.4 55.7L124.0 40.4L118.4 36.7L107.6 48.0L103.0 47.0L98.7 32.2L91.6 33.0L88.4 49.0L83.8 51.3L71.7 42.8L66.1 48.1L72.1 62.4L69.4 67.2L54.3 68.6L52.5 76.2L65.5 83.0L65.8 88.3L53.8 98.9L56.4 105.6L71.1 102.4L74.2 106.1L69.8 121.2L75.6 124.4L86.4 113.0L91.0 113.7L95.3 127.4L102.0 126.1L105.1 111.2L109.5 108.8L120.5 116.1L125.6 111.0L120.5 98.1ZM120.8 77.3L119.9 70.7L117.4 64.8L113.6 59.8L108.5 56.3L102.6 54.4L96.3 54.2L89.9 55.9L84.0 59.4L79.0 64.3L75.2 70.4L72.9 77.2L72.3 84.2L73.4 91.0L76.1 96.9L80.2 101.7L85.4 105.0L91.3 106.7L97.6 106.6L103.7 104.7L109.4 101.2L114.2 96.4L117.8 90.6L120.1 84.1Z" fill="#3030f2" fill-rule="evenodd"/></svg></div>
<div class="a" style="left:1467px;top:745px;width:308px;height:334px;background:#f6f5f4"></div>
<div class="a" style="left:1471px;top:775px;width:300px;height:300px;background:#000;overflow:hidden"><svg class="gl" width="300" height="300" viewBox="0 0 300 300"><path d="M242.7 159.4L231.3 161.9L210.6 151.0L221.7 148.7ZM220.5 152.3L216.9 151.5L196.4 140.8L200.0 141.6ZM214.7 138.8L209.0 139.6L188.5 129.3L194.1 128.5ZM188.0 169.1L175.7 170.4L156.3 158.8L168.3 157.6Z" fill="#00af2d" stroke="#00af2d" stroke-width=".6"/><path d="M230.2 142.5L220.5 152.3L200.0 141.6L209.3 132.2ZM192.1 148.2L187.0 152.8L167.2 141.8L172.1 137.4Z" fill="#009123" stroke="#009123" stroke-width=".6"/><path d="M209.0 139.6L204.9 153.3L184.7 142.4L188.5 129.3Z" fill="#004b0f" stroke="#004b0f" stroke-width=".6"/><path d="M204.9 153.3L201.0 155.3L180.9 144.4L184.7 142.4Z" fill="#00a52d" stroke="#00a52d" stroke-width=".6"/><path d="M187.0 152.8L190.6 165.0L170.8 153.6L167.2 141.8ZM183.4 182.7L183.1 187.3L163.7 175.1L163.9 170.7ZM172.5 196.5L173.9 202.3L154.9 189.5L153.4 183.9ZM186.1 199.3L188.3 202.5L168.9 189.9L166.8 186.8ZM183.3 215.6L187.7 218.4L168.5 205.2L164.1 202.5ZM201.2 209.0L203.4 220.8L183.8 207.8L181.6 196.3ZM216.6 204.6L224.9 210.9L204.8 198.4L196.7 192.3Z" fill="#002d0f" stroke="#002d0f" stroke-width=".6"/><path d="M190.6 165.0L188.0 169.1L168.3 157.6L170.8 153.6Z" fill="#007323" stroke="#007323" stroke-width=".6"/><path d="M175.7 170.4L173.5 177.0L154.2 165.1L156.3 158.8ZM188.3 202.5L183.3 215.6L164.1 202.5L168.9 189.9Z" fill="#005519" stroke="#005519" stroke-width=".6"/><path d="M183.1 187.3L172.5 196.5L153.4 183.9L163.7 175.1Z" fill="#009b23" stroke="#009b23" stroke-width=".6"/><clipPath id="hc7"><path d="M216.6 178.7L216.4 176.6L215.7 174.7L214.5 173.2L213.0 172.2L211.2 171.7L209.2 171.9L207.2 172.6L205.3 173.9L203.7 175.6L202.4 177.7L201.5 179.9L201.2 182.2L201.4 184.4L202.2 186.3L203.3 187.8L204.9 188.8L206.7 189.2L208.7 189.0L210.7 188.2L212.6 187.0L214.2 185.2L215.4 183.2L216.3 181.0Z"/></clipPath><g clip-path="url(#hc7)"><path d="M216.6 178.7L216.4 176.6L215.7 174.7L214.5 173.2L213.0 172.2L211.2 171.7L209.2 171.9L207.2 172.6L205.3 173.9L203.7 175.6L202.4 177.7L201.5 179.9L201.2 182.2L201.4 184.4L202.2 186.3L203.3 187.8L204.9 188.8L206.7 189.2L208.7 189.0L210.7 188.2L212.6 187.0L214.2 185.2L215.4 183.2L216.3 181.0Z" fill="#000"/><path d="M216.6 178.7L216.4 176.6L196.2 165.1L196.4 167.1ZM216.4 176.6L215.7 174.7L195.5 163.2L196.2 165.1ZM215.7 174.7L214.5 173.2L194.3 161.7L195.5 163.2ZM214.5 173.2L213.0 172.2L192.8 160.8L194.3 161.7Z" fill="#002808" stroke="#002808" stroke-width=".6"/><path d="M204.9 188.8L206.7 189.2L186.8 177.2L185.0 176.7ZM208.7 189.0L210.7 188.2L190.7 176.3L188.8 177.0ZM210.7 188.2L212.6 187.0L192.5 175.1L190.7 176.3Z" fill="#00a828" stroke="#00a828" stroke-width=".6"/><path d="M206.7 189.2L208.7 189.0L188.8 177.0L186.8 177.2Z" fill="#00b828" stroke="#00b828" stroke-width=".6"/><path d="M212.6 187.0L214.2 185.2L194.1 173.4L192.5 175.1Z" fill="#008828" stroke="#008828" stroke-width=".6"/><path d="M214.2 185.2L215.4 183.2L195.3 171.5L194.1 173.4Z" fill="#007818" stroke="#007818" stroke-width=".6"/><path d="M215.4 183.2L216.3 181.0L196.1 169.3L195.3 171.5Z" fill="#005818" stroke="#005818" stroke-width=".6"/><path d="M216.3 181.0L216.6 178.7L196.4 167.1L196.1 169.3Z" fill="#003808" stroke="#003808" stroke-width=".6"/></g><path d="M229.0 191.3L240.1 189.8L242.3 183.7L233.5 178.3L233.9 173.9L243.8 165.2L242.7 159.4L231.3 161.9L229.3 158.7L234.4 145.6L230.2 142.5L220.5 152.3L216.9 151.5L214.7 138.8L209.0 139.6L204.9 153.3L201.0 155.3L192.1 148.2L187.0 152.8L190.6 165.0L188.0 169.1L175.7 170.4L173.5 177.0L183.4 182.7L183.1 187.3L172.5 196.5L173.9 202.3L186.1 199.3L188.3 202.5L183.3 215.6L187.7 218.4L197.5 208.4L201.2 209.0L203.4 220.8L208.9 219.7L212.8 206.7L216.6 204.6L224.9 210.9L229.5 206.4L226.5 195.3ZM216.6 178.7L216.4 176.6L215.7 174.7L214.5 173.2L213.0 172.2L211.2 171.7L209.2 171.9L207.2 172.6L205.3 173.9L203.7 175.6L202.4 177.7L201.5 179.9L201.2 182.2L201.4 184.4L202.2 186.3L203.3 187.8L204.9 188.8L206.7 189.2L208.7 189.0L210.7 188.2L212.6 187.0L214.2 185.2L215.4 183.2L216.3 181.0Z" fill="#00c130" fill-rule="evenodd"/><path d="M172.0 156.5L159.4 159.0L149.8 153.3L162.2 150.9ZM127.4 118.5L121.5 117.7L112.3 112.5L118.0 113.4ZM113.6 130.9L108.5 131.1L99.4 125.6L104.5 125.5ZM103.2 118.1L96.9 119.4L88.0 114.1L94.2 112.9ZM92.8 134.3L87.7 136.2L78.9 130.6L84.0 128.7ZM51.8 165.4L37.1 164.3L29.3 157.9L43.7 159.1ZM40.9 186.4L25.9 190.3L18.4 183.3L33.1 179.6ZM176.5 178.9L164.8 177.3L155.2 171.2L166.8 172.9Z" fill="#af1900" stroke="#af1900" stroke-width=".6"/><path d="M160.7 137.6L148.5 144.3L139.0 138.7L151.0 132.3ZM132.8 134.5L128.2 133.0L118.9 127.5L123.4 129.0ZM78.2 126.2L72.2 129.5L63.7 123.9L69.6 120.7ZM36.5 208.6L22.9 216.9L15.5 209.5L28.9 201.4Z" fill="#a51900" stroke="#a51900" stroke-width=".6"/><path d="M143.5 124.1L132.8 134.5L123.4 129.0L133.9 118.9ZM55.3 142.1L50.2 147.2L42.1 141.1L47.1 136.2ZM39.1 229.6L28.2 241.2L20.7 233.3L31.4 222.0Z" fill="#910f00" stroke="#910f00" stroke-width=".6"/><path d="M121.5 117.7L113.6 130.9L104.5 125.5L112.3 112.5ZM37.1 164.3L33.6 170.6L25.9 164.1L29.3 157.9Z" fill="#730f00" stroke="#730f00" stroke-width=".6"/><path d="M96.9 119.4L92.8 134.3L84.0 128.7L88.0 114.1ZM25.9 190.3L24.4 197.0L16.9 189.9L18.4 183.3Z" fill="#4b0500" stroke="#4b0500" stroke-width=".6"/><path d="M72.2 129.5L72.7 144.5L64.2 138.6L63.7 123.9ZM50.2 147.2L55.4 160.7L47.3 154.4L42.1 141.1ZM33.6 170.6L43.0 180.9L35.2 174.2L25.9 164.1ZM22.9 216.9L23.4 223.3L16.0 215.8L15.5 209.5ZM37.8 224.6L39.1 229.6L31.4 222.0L30.2 217.1ZM28.2 241.2L30.7 246.6L23.2 238.6L20.7 233.3ZM45.2 243.1L48.0 247.0L40.3 239.2L37.6 235.3ZM40.8 260.6L45.0 264.4L37.4 256.2L33.3 252.4ZM58.3 256.8L62.2 259.3L54.3 251.3L50.4 248.8ZM79.9 265.5L81.1 278.4L73.0 270.2L71.8 257.5ZM99.3 265.2L104.3 276.0L95.9 268.0L91.0 257.3ZM118.6 258.7L126.8 266.5L118.1 258.8L110.0 251.1Z" fill="#2d0500" stroke="#2d0500" stroke-width=".6"/><path d="M72.7 144.5L68.0 148.1L59.6 142.1L64.2 138.6Z" fill="#9b0f00" stroke="#9b0f00" stroke-width=".6"/><path d="M68.0 148.1L55.3 142.1L47.1 136.2L59.6 142.1Z" fill="#9b1900" stroke="#9b1900" stroke-width=".6"/><path d="M55.4 160.7L51.8 165.4L43.7 159.1L47.3 154.4Z" fill="#7d0f00" stroke="#7d0f00" stroke-width=".6"/><path d="M43.0 180.9L40.9 186.4L33.1 179.6L35.2 174.2Z" fill="#5f0f00" stroke="#5f0f00" stroke-width=".6"/><path d="M37.0 203.1L36.5 208.6L28.9 201.4L29.3 196.0Z" fill="#370500" stroke="#370500" stroke-width=".6"/><path d="M48.0 247.0L40.8 260.6L33.3 252.4L40.3 239.2Z" fill="#690f00" stroke="#690f00" stroke-width=".6"/><path d="M62.2 259.3L59.2 273.3L51.4 265.0L54.3 251.3Z" fill="#410500" stroke="#410500" stroke-width=".6"/><clipPath id="hc8"><path d="M121.2 196.1L120.5 191.6L118.7 187.6L115.9 184.5L112.2 182.4L108.0 181.4L103.4 181.8L98.8 183.4L94.5 186.2L90.9 189.9L88.1 194.3L86.4 199.2L86.0 204.0L86.7 208.6L88.7 212.5L91.6 215.6L95.3 217.6L99.6 218.4L104.2 217.9L108.7 216.2L112.8 213.5L116.3 209.8L119.0 205.5L120.7 200.8Z"/></clipPath><g clip-path="url(#hc8)"><path d="M121.2 196.1L120.5 191.6L118.7 187.6L115.9 184.5L112.2 182.4L108.0 181.4L103.4 181.8L98.8 183.4L94.5 186.2L90.9 189.9L88.1 194.3L86.4 199.2L86.0 204.0L86.7 208.6L88.7 212.5L91.6 215.6L95.3 217.6L99.6 218.4L104.2 217.9L108.7 216.2L112.8 213.5L116.3 209.8L119.0 205.5L120.7 200.8Z" fill="#000"/><path d="M121.2 196.1L120.5 191.6L111.6 185.1L112.2 189.5ZM120.5 191.6L118.7 187.6L109.8 181.2L111.6 185.1ZM118.7 187.6L115.9 184.5L107.0 178.1L109.8 181.2ZM115.9 184.5L112.2 182.4L103.4 176.0L107.0 178.1Z" fill="#280800" stroke="#280800" stroke-width=".6"/><path d="M95.3 217.6L99.6 218.4L91.1 211.3L86.8 210.5ZM104.2 217.9L108.7 216.2L100.0 209.2L95.6 210.9ZM108.7 216.2L112.8 213.5L104.1 206.6L100.0 209.2Z" fill="#a81800" stroke="#a81800" stroke-width=".6"/><path d="M99.6 218.4L104.2 217.9L95.6 210.9L91.1 211.3Z" fill="#b81800" stroke="#b81800" stroke-width=".6"/><path d="M112.8 213.5L116.3 209.8L107.5 203.0L104.1 206.6Z" fill="#881800" stroke="#881800" stroke-width=".6"/><path d="M116.3 209.8L119.0 205.5L110.1 198.8L107.5 203.0Z" fill="#780800" stroke="#780800" stroke-width=".6"/><path d="M119.0 205.5L120.7 200.8L111.7 194.2L110.1 198.8Z" fill="#580800" stroke="#580800" stroke-width=".6"/><path d="M120.7 200.8L121.2 196.1L112.2 189.5L111.7 194.2Z" fill="#380800" stroke="#380800" stroke-width=".6"/></g><path d="M164.0 172.5L173.7 161.9L172.0 156.5L159.4 159.0L157.2 155.0L164.1 141.9L160.7 137.6L148.5 144.3L144.9 141.3L148.3 126.9L143.5 124.1L132.8 134.5L128.2 133.0L127.4 118.5L121.5 117.7L113.6 130.9L108.5 131.1L103.2 118.1L96.9 119.4L92.8 134.3L87.7 136.2L78.2 126.2L72.2 129.5L72.7 144.5L68.0 148.1L55.3 142.1L50.2 147.2L55.4 160.7L51.8 165.4L37.1 164.3L33.6 170.6L43.0 180.9L40.9 186.4L25.9 190.3L24.4 197.0L37.0 203.1L36.5 208.6L22.9 216.9L23.4 223.3L37.8 224.6L39.1 229.6L28.2 241.2L30.7 246.6L45.2 243.1L48.0 247.0L40.8 260.6L45.0 264.4L58.3 256.8L62.2 259.3L59.2 273.3L64.4 275.3L75.3 264.5L79.9 265.5L81.1 278.4L86.9 278.5L94.4 265.8L99.3 265.2L104.3 276.0L110.1 274.2L113.9 260.9L118.6 258.7L126.8 266.5L132.1 263.2L132.0 250.4L136.2 247.0L146.6 251.2L151.0 246.6L147.2 235.3L150.4 231.0L162.3 231.3L165.4 225.8L158.3 217.1L160.3 212.2L172.5 208.6L174.1 202.6L164.4 197.2L165.0 192.1L176.5 184.8L176.5 178.9L164.8 177.3ZM121.2 196.1L120.5 191.6L118.7 187.6L115.9 184.5L112.2 182.4L108.0 181.4L103.4 181.8L98.8 183.4L94.5 186.2L90.9 189.9L88.1 194.3L86.4 199.2L86.0 204.0L86.7 208.6L88.7 212.5L91.6 215.6L95.3 217.6L99.6 218.4L104.2 217.9L108.7 216.2L112.8 213.5L116.3 209.8L119.0 205.5L120.7 200.8Z" fill="#c11800" fill-rule="evenodd"/><path d="M139.3 71.6L126.2 69.3L121.4 67.2L134.5 69.5ZM113.3 34.4L106.7 32.7L102.0 30.9L108.5 32.6ZM76.1 57.4L62.0 53.3L57.6 51.2L71.7 55.3ZM66.2 76.7L51.8 82.7L47.6 80.3L61.9 74.4Z" fill="#2d2dd7" stroke="#2d2dd7" stroke-width=".6"/><path d="M129.5 46.0L116.5 52.9L111.8 50.9L124.7 44.1ZM85.8 34.7L79.1 37.8L74.6 35.9L81.3 32.9Z" fill="#2d2dcd" stroke="#2d2dcd" stroke-width=".6"/><path d="M106.7 32.7L98.9 46.8L94.3 44.9L102.0 30.9Z" fill="#191987" stroke="#191987" stroke-width=".6"/><path d="M98.9 46.8L94.0 47.3L89.5 45.4L94.3 44.9Z" fill="#2d2de1" stroke="#2d2de1" stroke-width=".6"/><path d="M79.1 37.8L80.1 53.8L75.6 51.8L74.6 35.9ZM57.8 60.0L67.6 71.4L63.3 69.2L53.6 57.9ZM51.8 82.7L52.1 90.4L47.9 87.9L47.6 80.3ZM66.6 92.5L68.3 97.3L64.0 94.8L62.3 90.1ZM59.4 110.7L63.7 116.1L59.5 113.4L55.2 108.1ZM81.3 111.1L80.9 126.3L76.5 123.5L76.9 108.5ZM99.7 113.0L107.5 124.2L102.9 121.5L95.2 110.4Z" fill="#0f0f37" stroke="#0f0f37" stroke-width=".6"/><path d="M80.1 53.8L76.1 57.4L71.7 55.3L75.6 51.8Z" fill="#2323b9" stroke="#2323b9" stroke-width=".6"/><path d="M62.0 53.3L57.8 60.0L53.6 57.9L57.6 51.2Z" fill="#191991" stroke="#191991" stroke-width=".6"/><path d="M67.6 71.4L66.2 76.7L61.9 74.4L63.3 69.2Z" fill="#0f0f5f" stroke="#0f0f5f" stroke-width=".6"/><path d="M68.3 97.3L59.4 110.7L55.2 108.1L64.0 94.8Z" fill="#23239b" stroke="#23239b" stroke-width=".6"/><clipPath id="hc9"><path d="M120.8 77.3L119.9 70.7L117.4 64.8L113.6 59.8L108.5 56.3L102.6 54.4L96.3 54.2L89.9 55.9L84.0 59.4L79.0 64.3L75.2 70.4L72.9 77.2L72.3 84.2L73.4 91.0L76.1 96.9L80.2 101.7L85.4 105.0L91.3 106.7L97.6 106.6L103.7 104.7L109.4 101.2L114.2 96.4L117.8 90.6L120.1 84.1Z"/></clipPath><g clip-path="url(#hc9)"><path d="M120.8 77.3L119.9 70.7L117.4 64.8L113.6 59.8L108.5 56.3L102.6 54.4L96.3 54.2L89.9 55.9L84.0 59.4L79.0 64.3L75.2 70.4L72.9 77.2L72.3 84.2L73.4 91.0L76.1 96.9L80.2 101.7L85.4 105.0L91.3 106.7L97.6 106.6L103.7 104.7L109.4 101.2L114.2 96.4L117.8 90.6L120.1 84.1Z" fill="#000"/><path d="M120.8 77.3L119.9 70.7L115.1 68.6L116.0 75.1ZM119.9 70.7L117.4 64.8L112.7 62.7L115.1 68.6ZM117.4 64.8L113.6 59.8L108.8 57.8L112.7 62.7ZM113.6 59.8L108.5 56.3L103.8 54.3L108.8 57.8ZM120.1 84.1L120.8 77.3L116.0 75.1L115.3 81.8Z" fill="#080838" stroke="#080838" stroke-width=".6"/><path d="M85.4 105.0L91.3 106.7L86.9 104.1L81.0 102.5ZM91.3 106.7L97.6 106.6L93.1 104.0L86.9 104.1ZM97.6 106.6L103.7 104.7L99.2 102.2L93.1 104.0Z" fill="#2828d8" stroke="#2828d8" stroke-width=".6"/><path d="M103.7 104.7L109.4 101.2L104.8 98.8L99.2 102.2Z" fill="#2828c8" stroke="#2828c8" stroke-width=".6"/><path d="M109.4 101.2L114.2 96.4L109.5 94.0L104.8 98.8Z" fill="#2828b8" stroke="#2828b8" stroke-width=".6"/><path d="M114.2 96.4L117.8 90.6L113.1 88.2L109.5 94.0Z" fill="#181898" stroke="#181898" stroke-width=".6"/><path d="M117.8 90.6L120.1 84.1L115.3 81.8L113.1 88.2Z" fill="#181868" stroke="#181868" stroke-width=".6"/></g><path d="M116.7 102.9L129.4 106.2L133.3 99.9L124.8 89.5L126.2 84.5L139.3 78.8L139.3 71.6L126.2 69.3L124.8 64.5L133.4 51.6L129.5 46.0L116.5 52.9L112.7 50.2L113.3 34.4L106.7 32.7L98.9 46.8L94.0 47.3L85.8 34.7L79.1 37.8L80.1 53.8L76.1 57.4L62.0 53.3L57.8 60.0L67.6 71.4L66.2 76.7L51.8 82.7L52.1 90.4L66.6 92.5L68.3 97.3L59.4 110.7L63.7 116.1L77.3 108.6L81.3 111.1L80.9 126.3L87.4 127.4L95.0 113.7L99.7 113.0L107.5 124.2L113.7 121.0L113.0 106.4ZM120.8 77.3L119.9 70.7L117.4 64.8L113.6 59.8L108.5 56.3L102.6 54.4L96.3 54.2L89.9 55.9L84.0 59.4L79.0 64.3L75.2 70.4L72.9 77.2L72.3 84.2L73.4 91.0L76.1 96.9L80.2 101.7L85.4 105.0L91.3 106.7L97.6 106.6L103.7 104.7L109.4 101.2L114.2 96.4L117.8 90.6L120.1 84.1Z" fill="#3030f2" fill-rule="evenodd"/></svg></div>
<div class="a gw" style="left:1398px;top:671px;width:309px;height:332px"><div class="tbar"></div><div class="wi" style="left:5px;top:5px"></div><div class="ttl in" style="left:0;width:243px;top:7px">glxgears</div></div>
<div class="a" style="left:1402px;top:699px;width:301px;height:300px;background:#000;overflow:hidden"><svg class="gl" width="300" height="300" viewBox="0 0 300 300"><path d="M243.9 165.3L232.8 165.7L212.1 154.7L222.9 154.4ZM220.4 139.0L214.8 138.8L194.2 128.5L199.7 128.8ZM209.0 151.9L205.0 153.3L184.8 142.4L188.7 141.2ZM190.7 164.9L178.8 164.0L159.3 152.5L170.9 153.5Z" fill="#00af2d" stroke="#00af2d" stroke-width=".6"/><path d="M234.5 145.7L223.9 153.8L203.3 143.1L213.5 135.3Z" fill="#009b23" stroke="#009b23" stroke-width=".6"/><path d="M223.9 153.8L220.6 152.3L200.0 141.6L203.3 143.1ZM197.6 144.3L192.2 148.1L172.2 137.3L177.5 133.7ZM183.4 182.6L171.9 190.1L152.7 177.7L163.9 170.6Z" fill="#00a52d" stroke="#00a52d" stroke-width=".6"/><path d="M214.8 138.8L209.0 151.9L188.7 141.2L194.2 128.5Z" fill="#005f19" stroke="#005f19" stroke-width=".6"/><path d="M192.2 148.1L193.8 161.2L173.9 149.9L172.2 137.3ZM175.8 170.3L184.3 178.0L164.8 166.1L156.4 158.6ZM171.9 190.1L172.4 196.4L153.4 183.8L152.7 177.7ZM184.5 195.6L186.1 199.3L166.7 186.7L165.1 183.2ZM179.4 211.9L183.2 215.6L164.1 202.5L160.3 198.9ZM197.4 208.4L197.8 221.0L178.4 207.9L177.9 195.7ZM212.8 206.7L219.7 214.7L199.8 202.0L192.9 194.2Z" fill="#002d0f" stroke="#002d0f" stroke-width=".6"/><path d="M193.8 161.2L190.7 164.9L170.9 153.5L173.9 149.9Z" fill="#008723" stroke="#008723" stroke-width=".6"/><path d="M178.8 164.0L175.8 170.3L156.4 158.6L159.3 152.5ZM186.1 199.3L179.4 211.9L160.3 198.9L166.7 186.7Z" fill="#006919" stroke="#006919" stroke-width=".6"/><path d="M184.3 178.0L183.4 182.6L163.9 170.6L164.8 166.1Z" fill="#00410f" stroke="#00410f" stroke-width=".6"/><clipPath id="hc10"><path d="M216.6 178.7L216.4 176.6L215.7 174.7L214.5 173.2L213.0 172.2L211.2 171.7L209.2 171.9L207.2 172.6L205.3 173.9L203.7 175.6L202.4 177.7L201.5 179.9L201.2 182.2L201.4 184.4L202.2 186.3L203.3 187.8L204.9 188.8L206.7 189.2L208.7 189.0L210.7 188.2L212.6 187.0L214.2 185.2L215.4 183.2L216.3 181.0Z"/></clipPath><g clip-path="url(#hc10)"><path d="M216.6 178.7L216.4 176.6L215.7 174.7L214.5 173.2L213.0 172.2L211.2 171.7L209.2 171.9L207.2 172.6L205.3 173.9L203.7 175.6L202.4 177.7L201.5 179.9L201.2 182.2L201.4 184.4L202.2 186.3L203.3 187.8L204.9 188.8L206.7 189.2L208.7 189.0L210.7 188.2L212.6 187.0L214.2 185.2L215.4 183.2L216.3 181.0Z" fill="#000"/><path d="M216.6 178.7L216.4 176.6L196.2 165.1L196.4 167.1ZM216.4 176.6L215.7 174.7L195.5 163.2L196.2 165.1ZM215.7 174.7L214.5 173.2L194.3 161.7L195.5 163.2ZM214.5 173.2L213.0 172.2L192.8 160.8L194.3 161.7Z" fill="#002808" stroke="#002808" stroke-width=".6"/><path d="M204.9 188.8L206.7 189.2L186.8 177.2L185.0 176.7ZM208.7 189.0L210.7 188.2L190.7 176.3L188.8 177.0ZM210.7 188.2L212.6 187.0L192.5 175.1L190.7 176.3Z" fill="#00a828" stroke="#00a828" stroke-width=".6"/><path d="M206.7 189.2L208.7 189.0L188.8 177.0L186.8 177.2Z" fill="#00b828" stroke="#00b828" stroke-width=".6"/><path d="M212.6 187.0L214.2 185.2L194.1 173.4L192.5 175.1Z" fill="#008828" stroke="#008828" stroke-width=".6"/><path d="M214.2 185.2L215.4 183.2L195.3 171.5L194.1 173.4Z" fill="#007818" stroke="#007818" stroke-width=".6"/><path d="M215.4 183.2L216.3 181.0L196.1 169.3L195.3 171.5Z" fill="#005818" stroke="#005818" stroke-width=".6"/><path d="M216.3 181.0L216.6 178.7L196.4 167.1L196.1 169.3Z" fill="#003808" stroke="#003808" stroke-width=".6"/></g><path d="M226.4 195.3L237.2 195.9L240.1 190.0L232.5 182.8L233.5 178.4L244.1 171.3L243.9 165.3L232.8 165.7L231.4 162.0L238.0 149.6L234.5 145.7L223.9 153.8L220.6 152.3L220.4 139.0L214.8 138.8L209.0 151.9L205.0 153.3L197.6 144.3L192.2 148.1L193.8 161.2L190.7 164.9L178.8 164.0L175.8 170.3L184.3 178.0L183.4 182.6L171.9 190.1L172.4 196.4L184.5 195.6L186.1 199.3L179.4 211.9L183.2 215.6L194.0 207.1L197.4 208.4L197.8 221.0L203.3 220.8L208.9 208.2L212.8 206.7L219.7 214.7L224.8 211.0L223.5 198.9ZM216.6 178.7L216.4 176.6L215.7 174.7L214.5 173.2L213.0 172.2L211.2 171.7L209.2 171.9L207.2 172.6L205.3 173.9L203.7 175.6L202.4 177.7L201.5 179.9L201.2 182.2L201.4 184.4L202.2 186.3L203.3 187.8L204.9 188.8L206.7 189.2L208.7 189.0L210.7 188.2L212.6 187.0L214.2 185.2L215.4 183.2L216.3 181.0Z" fill="#00c130" fill-rule="evenodd"/><path d="M169.7 151.3L157.1 154.9L147.5 149.2L160.0 145.7ZM128.1 132.9L123.4 131.8L114.2 126.4L118.8 127.5ZM121.4 117.6L115.4 117.3L106.2 112.1L112.2 112.5ZM108.4 131.1L103.2 131.8L94.2 126.2L99.4 125.6ZM96.8 119.4L90.5 121.1L81.7 115.8L87.9 114.1ZM48.4 170.5L33.6 170.7L25.8 164.2L40.4 164.0ZM39.1 192.1L24.3 197.2L16.8 190.1L31.4 185.1ZM176.0 173.0L164.0 172.4L154.4 166.4L166.2 167.1Z" fill="#af1900" stroke="#af1900" stroke-width=".6"/><path d="M156.9 133.6L144.9 141.2L135.4 135.7L147.2 128.3ZM143.4 124.1L138.3 121.7L128.8 116.6L133.8 118.9ZM87.6 136.3L82.4 138.6L73.8 132.9L78.8 130.6ZM72.1 129.5L66.2 133.3L57.8 127.6L63.6 123.9ZM63.5 152.0L50.1 147.3L42.0 141.2L55.2 146.0ZM175.4 196.6L165.0 192.0L155.5 185.8L165.8 190.3Z" fill="#a51900" stroke="#a51900" stroke-width=".6"/><path d="M138.3 121.7L128.1 132.9L118.8 127.5L128.8 116.6ZM50.1 147.3L45.4 152.7L37.4 146.5L42.0 141.2ZM40.8 234.4L30.7 246.7L23.3 238.7L33.1 226.8Z" fill="#870f00" stroke="#870f00" stroke-width=".6"/><path d="M115.4 117.3L108.4 131.1L99.4 125.6L106.2 112.1ZM33.6 170.7L30.5 177.2L22.8 170.5L25.8 164.2Z" fill="#690f00" stroke="#690f00" stroke-width=".6"/><path d="M90.5 121.1L87.6 136.3L78.8 130.6L81.7 115.8ZM24.3 197.2L23.3 203.9L15.9 196.6L16.8 190.1Z" fill="#410500" stroke="#410500" stroke-width=".6"/><path d="M66.2 133.3L67.9 148.1L59.5 142.2L57.8 127.6ZM45.4 152.7L51.7 165.5L43.7 159.1L37.4 146.5ZM30.5 177.2L40.8 186.5L33.0 179.7L22.8 170.5ZM36.5 208.7L36.5 214.2L28.9 206.8L28.8 201.5ZM23.5 223.5L24.5 229.7L17.1 222.0L16.1 215.9ZM39.1 229.7L40.8 234.4L33.1 226.8L31.5 222.1ZM30.7 246.7L33.7 251.7L26.3 243.7L23.3 238.7ZM48.1 247.1L51.2 250.7L43.5 242.8L40.4 239.2ZM45.0 264.5L49.5 267.9L41.8 259.7L37.4 256.3ZM62.3 259.4L66.4 261.5L58.5 253.5L54.4 251.4ZM84.8 266.0L87.0 278.5L78.8 270.3L76.6 258.0ZM104.3 264.1L110.2 274.2L101.7 266.3L95.9 256.3ZM123.3 256.2L132.2 263.1L123.4 255.5L114.6 248.7Z" fill="#2d0500" stroke="#2d0500" stroke-width=".6"/><path d="M67.9 148.1L63.5 152.0L55.2 146.0L59.5 142.2Z" fill="#9b0f00" stroke="#9b0f00" stroke-width=".6"/><path d="M51.7 165.5L48.4 170.5L40.4 164.0L43.7 159.1Z" fill="#7d0f00" stroke="#7d0f00" stroke-width=".6"/><path d="M40.8 186.5L39.1 192.1L31.4 185.1L33.0 179.7Z" fill="#550f00" stroke="#550f00" stroke-width=".6"/><path d="M36.5 214.2L23.5 223.5L16.1 215.9L28.9 206.8Z" fill="#9b1900" stroke="#9b1900" stroke-width=".6"/><path d="M51.2 250.7L45.0 264.5L37.4 256.3L43.5 242.8Z" fill="#5f0f00" stroke="#5f0f00" stroke-width=".6"/><path d="M66.4 261.5L64.5 275.3L56.7 267.0L58.5 253.5Z" fill="#370500" stroke="#370500" stroke-width=".6"/><clipPath id="hc11"><path d="M121.2 196.1L120.5 191.6L118.7 187.6L115.9 184.5L112.2 182.4L108.0 181.4L103.4 181.8L98.8 183.4L94.5 186.2L90.9 189.9L88.1 194.3L86.4 199.2L86.0 204.0L86.7 208.6L88.7 212.5L91.6 215.6L95.3 217.6L99.6 218.4L104.2 217.9L108.7 216.2L112.8 213.5L116.3 209.8L119.0 205.5L120.7 200.8Z"/></clipPath><g clip-path="url(#hc11)"><path d="M121.2 196.1L120.5 191.6L118.7 187.6L115.9 184.5L112.2 182.4L108.0 181.4L103.4 181.8L98.8 183.4L94.5 186.2L90.9 189.9L88.1 194.3L86.4 199.2L86.0 204.0L86.7 208.6L88.7 212.5L91.6 215.6L95.3 217.6L99.6 218.4L104.2 217.9L108.7 216.2L112.8 213.5L116.3 209.8L119.0 205.5L120.7 200.8Z" fill="#000"/><path d="M121.2 196.1L120.5 191.6L111.6 185.1L112.2 189.5ZM120.5 191.6L118.7 187.6L109.8 181.2L111.6 185.1ZM118.7 187.6L115.9 184.5L107.0 178.1L109.8 181.2ZM115.9 184.5L112.2 182.4L103.4 176.0L107.0 178.1Z" fill="#280800" stroke="#280800" stroke-width=".6"/><path d="M95.3 217.6L99.6 218.4L91.1 211.3L86.8 210.5ZM104.2 217.9L108.7 216.2L100.0 209.2L95.6 210.9ZM108.7 216.2L112.8 213.5L104.1 206.6L100.0 209.2Z" fill="#a81800" stroke="#a81800" stroke-width=".6"/><path d="M99.6 218.4L104.2 217.9L95.6 210.9L91.1 211.3Z" fill="#b81800" stroke="#b81800" stroke-width=".6"/><path d="M112.8 213.5L116.3 209.8L107.5 203.0L104.1 206.6Z" fill="#881800" stroke="#881800" stroke-width=".6"/><path d="M116.3 209.8L119.0 205.5L110.1 198.8L107.5 203.0Z" fill="#780800" stroke="#780800" stroke-width=".6"/><path d="M119.0 205.5L120.7 200.8L111.7 194.2L110.1 198.8Z" fill="#580800" stroke="#580800" stroke-width=".6"/><path d="M120.7 200.8L121.2 196.1L112.2 189.5L111.7 194.2Z" fill="#380800" stroke="#380800" stroke-width=".6"/></g><path d="M162.8 167.7L171.9 156.4L169.7 151.3L157.1 154.9L154.6 151.0L160.7 137.6L156.9 133.6L144.9 141.2L141.1 138.6L143.4 124.1L138.3 121.7L128.1 132.9L123.4 131.8L121.4 117.6L115.4 117.3L108.4 131.1L103.2 131.8L96.8 119.4L90.5 121.1L87.6 136.3L82.4 138.6L72.1 129.5L66.2 133.3L67.9 148.1L63.5 152.0L50.1 147.3L45.4 152.7L51.7 165.5L48.4 170.5L33.6 170.7L30.5 177.2L40.8 186.5L39.1 192.1L24.3 197.2L23.3 203.9L36.5 208.7L36.5 214.2L23.5 223.5L24.5 229.7L39.1 229.7L40.8 234.4L30.7 246.7L33.7 251.7L48.1 247.1L51.2 250.7L45.0 264.5L49.5 267.9L62.3 259.4L66.4 261.5L64.5 275.3L69.9 276.8L80.0 265.5L84.8 266.0L87.0 278.5L92.8 278.1L99.4 265.1L104.3 264.1L110.2 274.2L115.9 272.0L118.7 258.7L123.3 256.2L132.2 263.1L137.2 259.4L136.2 246.9L140.1 243.3L151.1 246.5L155.1 241.6L150.5 230.9L153.4 226.4L165.4 225.7L168.2 220.1L160.4 212.1L162.0 207.2L174.2 202.5L175.4 196.6L165.0 192.0L165.3 187.0L176.5 178.8L176.0 173.0L164.0 172.4ZM121.2 196.1L120.5 191.6L118.7 187.6L115.9 184.5L112.2 182.4L108.0 181.4L103.4 181.8L98.8 183.4L94.5 186.2L90.9 189.9L88.1 194.3L86.4 199.2L86.0 204.0L86.7 208.6L88.7 212.5L91.6 215.6L95.3 217.6L99.6 218.4L104.2 217.9L108.7 216.2L112.8 213.5L116.3 209.8L119.0 205.5L120.7 200.8Z" fill="#c11800" fill-rule="evenodd"/><path d="M139.3 79.0L127.0 74.4L122.2 72.2L134.4 76.8ZM119.5 37.3L113.4 34.4L108.6 32.7L114.7 35.5ZM80.2 53.7L67.1 47.1L62.7 45.1L75.7 51.7Z" fill="#2d2dcd" stroke="#2d2dcd" stroke-width=".6"/><path d="M133.5 51.7L119.9 56.3L115.2 54.3L128.6 49.7ZM103.9 47.1L99.0 46.8L94.4 44.9L99.2 45.2ZM92.9 32.8L85.9 34.7L81.4 32.8L88.3 31.0ZM67.7 71.3L52.7 74.8L48.5 72.5L63.3 69.1Z" fill="#2d2dd7" stroke="#2d2dd7" stroke-width=".6"/><path d="M113.4 34.4L103.9 47.1L99.2 45.2L108.6 32.7Z" fill="#23239b" stroke="#23239b" stroke-width=".6"/><path d="M85.9 34.7L84.6 50.8L80.1 48.8L81.4 32.8Z" fill="#0f0f41" stroke="#0f0f41" stroke-width=".6"/><path d="M84.6 50.8L80.2 53.7L75.7 51.7L80.1 48.8Z" fill="#2d2dc3" stroke="#2d2dc3" stroke-width=".6"/><path d="M67.1 47.1L62.0 53.1L57.7 51.1L62.7 45.1Z" fill="#2323a5" stroke="#2323a5" stroke-width=".6"/><path d="M62.0 53.1L69.8 66.3L65.5 64.1L57.7 51.1ZM65.7 87.3L66.6 92.5L62.3 90.0L61.4 84.9ZM55.9 104.4L59.3 110.6L55.1 108.0L51.7 101.8ZM73.6 105.4L77.2 108.6L72.8 106.0L69.3 102.9ZM94.9 113.7L100.8 126.4L96.3 123.7L90.4 111.1Z" fill="#0f0f37" stroke="#0f0f37" stroke-width=".6"/><path d="M69.8 66.3L67.7 71.3L63.3 69.1L65.5 64.1Z" fill="#19197d" stroke="#19197d" stroke-width=".6"/><path d="M52.7 74.8L51.8 82.6L47.6 80.2L48.5 72.5ZM77.2 108.6L74.5 123.9L70.2 121.1L72.8 106.0Z" fill="#0f0f4b" stroke="#0f0f4b" stroke-width=".6"/><path d="M66.6 92.5L55.9 104.4L51.7 101.8L62.3 90.0Z" fill="#2323af" stroke="#2323af" stroke-width=".6"/><clipPath id="hc12"><path d="M120.8 77.3L119.9 70.7L117.4 64.8L113.6 59.8L108.5 56.3L102.6 54.4L96.3 54.2L89.9 55.9L84.0 59.4L79.0 64.3L75.2 70.4L72.9 77.2L72.3 84.2L73.4 91.0L76.1 96.9L80.2 101.7L85.4 105.0L91.3 106.7L97.6 106.6L103.7 104.7L109.4 101.2L114.2 96.4L117.8 90.6L120.1 84.1Z"/></clipPath><g clip-path="url(#hc12)"><path d="M120.8 77.3L119.9 70.7L117.4 64.8L113.6 59.8L108.5 56.3L102.6 54.4L96.3 54.2L89.9 55.9L84.0 59.4L79.0 64.3L75.2 70.4L72.9 77.2L72.3 84.2L73.4 91.0L76.1 96.9L80.2 101.7L85.4 105.0L91.3 106.7L97.6 106.6L103.7 104.7L109.4 101.2L114.2 96.4L117.8 90.6L120.1 84.1Z" fill="#000"/><path d="M120.8 77.3L119.9 70.7L115.1 68.6L116.0 75.1ZM119.9 70.7L117.4 64.8L112.7 62.7L115.1 68.6ZM117.4 64.8L113.6 59.8L108.8 57.8L112.7 62.7ZM113.6 59.8L108.5 56.3L103.8 54.3L108.8 57.8ZM120.1 84.1L120.8 77.3L116.0 75.1L115.3 81.8Z" fill="#080838" stroke="#080838" stroke-width=".6"/><path d="M85.4 105.0L91.3 106.7L86.9 104.1L81.0 102.5ZM91.3 106.7L97.6 106.6L93.1 104.0L86.9 104.1ZM97.6 106.6L103.7 104.7L99.2 102.2L93.1 104.0Z" fill="#2828d8" stroke="#2828d8" stroke-width=".6"/><path d="M103.7 104.7L109.4 101.2L104.8 98.8L99.2 102.2Z" fill="#2828c8" stroke="#2828c8" stroke-width=".6"/><path d="M109.4 101.2L114.2 96.4L109.5 94.0L104.8 98.8Z" fill="#2828b8" stroke="#2828b8" stroke-width=".6"/><path d="M114.2 96.4L117.8 90.6L113.1 88.2L109.5 94.0Z" fill="#181898" stroke="#181898" stroke-width=".6"/><path d="M117.8 90.6L120.1 84.1L115.3 81.8L113.1 88.2Z" fill="#181868" stroke="#181868" stroke-width=".6"/></g><path d="M112.9 106.4L124.7 112.0L129.4 106.3L122.7 94.4L124.8 89.6L138.2 86.2L139.3 79.0L127.0 74.4L126.3 69.4L136.4 57.9L133.5 51.7L119.9 56.3L116.6 53.0L119.5 37.3L113.4 34.4L103.9 47.1L99.0 46.8L92.9 32.8L85.9 34.7L84.6 50.8L80.2 53.7L67.1 47.1L62.0 53.1L69.8 66.3L67.7 71.3L52.7 74.8L51.8 82.6L65.7 87.3L66.6 92.5L55.9 104.4L59.3 110.6L73.6 105.4L77.2 108.6L74.5 123.9L80.8 126.2L90.2 113.6L94.9 113.7L100.8 126.4L107.3 124.3L108.8 109.3ZM120.8 77.3L119.9 70.7L117.4 64.8L113.6 59.8L108.5 56.3L102.6 54.4L96.3 54.2L89.9 55.9L84.0 59.4L79.0 64.3L75.2 70.4L72.9 77.2L72.3 84.2L73.4 91.0L76.1 96.9L80.2 101.7L85.4 105.0L91.3 106.7L97.6 106.6L103.7 104.7L109.4 101.2L114.2 96.4L117.8 90.6L120.1 84.1Z" fill="#3030f2" fill-rule="evenodd"/></svg></div>
<div class="a gw" style="left:1510px;top:608px;width:309px;height:333px"><div class="tbar"></div><div class="wi" style="left:5px;top:5px"></div><div class="ttl in" style="left:0;width:240px;top:7px">glxgears</div><svg class="a" style="left:0;top:0" width="309" height="27"><path d="M219.6 17.5l4.2 -4.6l4.2 4.6" fill="none" stroke="#50555a" stroke-width="2.0"/><path d="M242.5 18.5h9" fill="none" stroke="#50555a" stroke-width="2.0"/><rect x="266.2" y="10.7" width="7.6" height="7.6" fill="none" stroke="#50555a" stroke-width="2.0"/><path d="M289.0 10.5l8 8m0 -8l-8 8" fill="none" stroke="#50555a" stroke-width="2.0"/></svg></div>
<div class="a" style="left:1514px;top:636px;width:301px;height:301px;background:#000;overflow:hidden"><svg class="gl" width="300" height="300" viewBox="0 0 300 300"><path d="M244.0 166.3L233.0 166.4L212.3 155.4L223.1 155.4ZM221.3 139.2L215.8 138.8L195.2 128.5L200.6 128.9ZM209.8 151.8L205.7 153.0L185.5 142.1L189.4 141.0ZM191.2 164.2L179.4 162.9L159.9 151.5L171.4 152.8Z" fill="#00af2d" stroke="#00af2d" stroke-width=".6"/><path d="M235.2 146.3L224.5 154.2L203.9 143.5L214.2 136.0ZM224.5 154.2L221.2 152.5L200.6 141.8L203.9 143.5ZM198.6 143.7L193.1 147.3L173.1 136.6L178.4 133.1ZM183.5 181.8L171.9 188.9L152.7 176.6L164.1 169.8Z" fill="#00a52d" stroke="#00a52d" stroke-width=".6"/><path d="M215.8 138.8L209.8 151.8L189.4 141.0L195.2 128.5Z" fill="#005f19" stroke="#005f19" stroke-width=".6"/><path d="M193.1 147.3L194.4 160.5L174.5 149.4L173.1 136.6ZM176.2 169.2L184.6 177.2L165.0 165.3L156.8 157.5ZM171.9 188.9L172.3 195.3L153.2 182.7L152.7 176.6ZM184.3 194.9L185.8 198.7L166.4 186.1L164.9 182.5ZM178.8 211.1L182.5 215.0L163.3 201.9L159.7 198.1ZM196.8 208.2L196.8 220.9L177.4 207.8L177.3 195.5ZM212.1 207.1L218.8 215.3L198.9 202.6L192.2 194.5Z" fill="#002d0f" stroke="#002d0f" stroke-width=".6"/><path d="M194.4 160.5L191.2 164.2L171.4 152.8L174.5 149.4Z" fill="#008723" stroke="#008723" stroke-width=".6"/><path d="M179.4 162.9L176.2 169.2L156.8 157.5L159.9 151.5Z" fill="#006919" stroke="#006919" stroke-width=".6"/><path d="M184.6 177.2L183.5 181.8L164.1 169.8L165.0 165.3Z" fill="#00410f" stroke="#00410f" stroke-width=".6"/><path d="M185.8 198.7L178.8 211.1L159.7 198.1L166.4 186.1Z" fill="#007319" stroke="#007319" stroke-width=".6"/><clipPath id="hc13"><path d="M216.6 178.7L216.4 176.6L215.7 174.7L214.5 173.2L213.0 172.2L211.2 171.7L209.2 171.9L207.2 172.6L205.3 173.9L203.7 175.6L202.4 177.7L201.5 179.9L201.2 182.2L201.4 184.4L202.2 186.3L203.3 187.8L204.9 188.8L206.7 189.2L208.7 189.0L210.7 188.2L212.6 187.0L214.2 185.2L215.4 183.2L216.3 181.0Z"/></clipPath><g clip-path="url(#hc13)"><path d="M216.6 178.7L216.4 176.6L215.7 174.7L214.5 173.2L213.0 172.2L211.2 171.7L209.2 171.9L207.2 172.6L205.3 173.9L203.7 175.6L202.4 177.7L201.5 179.9L201.2 182.2L201.4 184.4L202.2 186.3L203.3 187.8L204.9 188.8L206.7 189.2L208.7 189.0L210.7 188.2L212.6 187.0L214.2 185.2L215.4 183.2L216.3 181.0Z" fill="#000"/><path d="M216.6 178.7L216.4 176.6L196.2 165.1L196.4 167.1ZM216.4 176.6L215.7 174.7L195.5 163.2L196.2 165.1ZM215.7 174.7L214.5 173.2L194.3 161.7L195.5 163.2ZM214.5 173.2L213.0 172.2L192.8 160.8L194.3 161.7Z" fill="#002808" stroke="#002808" stroke-width=".6"/><path d="M204.9 188.8L206.7 189.2L186.8 177.2L185.0 176.7ZM208.7 189.0L210.7 188.2L190.7 176.3L188.8 177.0ZM210.7 188.2L212.6 187.0L192.5 175.1L190.7 176.3Z" fill="#00a828" stroke="#00a828" stroke-width=".6"/><path d="M206.7 189.2L208.7 189.0L188.8 177.0L186.8 177.2Z" fill="#00b828" stroke="#00b828" stroke-width=".6"/><path d="M212.6 187.0L214.2 185.2L194.1 173.4L192.5 175.1Z" fill="#008828" stroke="#008828" stroke-width=".6"/><path d="M214.2 185.2L215.4 183.2L195.3 171.5L194.1 173.4Z" fill="#007818" stroke="#007818" stroke-width=".6"/><path d="M215.4 183.2L216.3 181.0L196.1 169.3L195.3 171.5Z" fill="#005818" stroke="#005818" stroke-width=".6"/><path d="M216.3 181.0L216.6 178.7L196.4 167.1L196.1 169.3Z" fill="#003808" stroke="#003808" stroke-width=".6"/></g><path d="M233.4 179.2L244.1 172.4L244.0 166.3L233.0 166.4L231.7 162.6L238.5 150.4L235.2 146.3L224.5 154.2L221.2 152.5L221.3 139.2L215.8 138.8L209.8 151.8L205.7 153.0L198.6 143.7L193.1 147.3L194.4 160.5L191.2 164.2L179.4 162.9L176.2 169.2L184.6 177.2L183.5 181.8L171.9 188.9L172.3 195.3L184.3 194.9L185.8 198.7L178.8 211.1L182.5 215.0L193.4 206.7L196.8 208.2L196.8 220.9L202.3 220.9L208.2 208.4L212.1 207.1L218.8 215.3L223.9 211.7L222.9 199.5L225.9 196.0L236.6 196.9L239.6 191.0L232.3 183.6ZM216.6 178.7L216.4 176.6L215.7 174.7L214.5 173.2L213.0 172.2L211.2 171.7L209.2 171.9L207.2 172.6L205.3 173.9L203.7 175.6L202.4 177.7L201.5 179.9L201.2 182.2L201.4 184.4L202.2 186.3L203.3 187.8L204.9 188.8L206.7 189.2L208.7 189.0L210.7 188.2L212.6 187.0L214.2 185.2L215.4 183.2L216.3 181.0Z" fill="#00c130" fill-rule="evenodd"/><path d="M175.8 171.9L163.8 171.5L154.2 165.6L166.1 166.1ZM169.3 150.4L156.7 154.2L147.1 148.5L159.5 144.9ZM127.3 132.7L122.5 131.7L113.3 126.3L118.0 127.3ZM120.4 117.5L114.3 117.3L105.2 112.1L111.1 112.4ZM107.5 131.2L102.3 131.9L93.3 126.4L98.4 125.7ZM95.7 119.7L89.4 121.5L80.6 116.2L86.8 114.4ZM47.9 171.4L33.0 171.9L25.2 165.3L39.9 164.9ZM38.8 193.1L24.1 198.4L16.6 191.2L31.1 186.1Z" fill="#af1900" stroke="#af1900" stroke-width=".6"/><path d="M156.2 132.9L144.2 140.7L134.7 135.2L146.5 127.6ZM142.5 123.6L137.3 121.4L127.8 116.2L133.0 118.4ZM86.6 136.7L81.5 139.1L72.9 133.4L77.9 131.0ZM71.0 130.2L65.2 134.0L56.8 128.3L62.5 124.6ZM62.7 152.8L49.3 148.2L41.2 142.2L54.4 146.7ZM175.5 195.5L165.1 191.1L155.6 184.9L165.9 189.2Z" fill="#a51900" stroke="#a51900" stroke-width=".6"/><path d="M137.3 121.4L127.3 132.7L118.0 127.3L127.8 116.2ZM49.3 148.2L44.6 153.7L36.6 147.5L41.2 142.2ZM41.1 235.3L31.3 247.6L23.8 239.7L33.5 227.6Z" fill="#870f00" stroke="#870f00" stroke-width=".6"/><path d="M114.3 117.3L107.5 131.2L98.4 125.7L105.2 112.1ZM33.0 171.9L30.0 178.3L22.4 171.6L25.2 165.3Z" fill="#690f00" stroke="#690f00" stroke-width=".6"/><path d="M89.4 121.5L86.6 136.7L77.9 131.0L80.6 116.2Z" fill="#410500" stroke="#410500" stroke-width=".6"/><path d="M65.2 134.0L67.1 148.8L58.7 142.8L56.8 128.3ZM44.6 153.7L51.1 166.4L43.1 160.0L36.6 147.5ZM30.0 178.3L40.5 187.5L32.7 180.7L22.4 171.6ZM36.5 209.7L36.6 215.2L28.9 207.8L28.8 202.5ZM23.6 224.6L24.8 230.8L17.4 223.0L16.2 217.0ZM39.4 230.6L41.1 235.3L33.5 227.6L31.7 222.9ZM31.3 247.6L34.3 252.6L26.8 244.6L23.8 239.7ZM48.6 247.8L51.8 251.3L44.0 243.4L40.9 239.9ZM45.8 265.1L50.3 268.4L42.7 260.2L38.2 256.9ZM63.0 259.8L67.2 261.8L59.3 253.8L55.1 251.8ZM85.6 266.0L88.0 278.4L79.9 270.3L77.5 258.1ZM105.2 263.9L111.2 273.8L102.7 265.9L96.8 256.1ZM124.2 255.7L133.1 262.5L124.3 254.9L115.4 248.2Z" fill="#2d0500" stroke="#2d0500" stroke-width=".6"/><path d="M67.1 148.8L62.7 152.8L54.4 146.7L58.7 142.8Z" fill="#910f00" stroke="#910f00" stroke-width=".6"/><path d="M51.1 166.4L47.9 171.4L39.9 164.9L43.1 160.0Z" fill="#730f00" stroke="#730f00" stroke-width=".6"/><path d="M40.5 187.5L38.8 193.1L31.1 186.1L32.7 180.7Z" fill="#550f00" stroke="#550f00" stroke-width=".6"/><path d="M24.1 198.4L23.2 205.1L15.7 197.8L16.6 191.2ZM67.2 261.8L65.5 275.6L57.6 267.4L59.3 253.8Z" fill="#370500" stroke="#370500" stroke-width=".6"/><path d="M36.6 215.2L23.6 224.6L16.2 217.0L28.9 207.8Z" fill="#9b1900" stroke="#9b1900" stroke-width=".6"/><path d="M51.8 251.3L45.8 265.1L38.2 256.9L44.0 243.4Z" fill="#5f0f00" stroke="#5f0f00" stroke-width=".6"/><clipPath id="hc14"><path d="M121.2 196.1L120.5 191.6L118.7 187.6L115.9 184.5L112.2 182.4L108.0 181.4L103.4 181.8L98.8 183.4L94.5 186.2L90.9 189.9L88.1 194.3L86.4 199.2L86.0 204.0L86.7 208.6L88.7 212.5L91.6 215.6L95.3 217.6L99.6 218.4L104.2 217.9L108.7 216.2L112.8 213.5L116.3 209.8L119.0 205.5L120.7 200.8Z"/></clipPath><g clip-path="url(#hc14)"><path d="M121.2 196.1L120.5 191.6L118.7 187.6L115.9 184.5L112.2 182.4L108.0 181.4L103.4 181.8L98.8 183.4L94.5 186.2L90.9 189.9L88.1 194.3L86.4 199.2L86.0 204.0L86.7 208.6L88.7 212.5L91.6 215.6L95.3 217.6L99.6 218.4L104.2 217.9L108.7 216.2L112.8 213.5L116.3 209.8L119.0 205.5L120.7 200.8Z" fill="#000"/><path d="M121.2 196.1L120.5 191.6L111.6 185.1L112.2 189.5ZM120.5 191.6L118.7 187.6L109.8 181.2L111.6 185.1ZM118.7 187.6L115.9 184.5L107.0 178.1L109.8 181.2ZM115.9 184.5L112.2 182.4L103.4 176.0L107.0 178.1Z" fill="#280800" stroke="#280800" stroke-width=".6"/><path d="M95.3 217.6L99.6 218.4L91.1 211.3L86.8 210.5ZM104.2 217.9L108.7 216.2L100.0 209.2L95.6 210.9ZM108.7 216.2L112.8 213.5L104.1 206.6L100.0 209.2Z" fill="#a81800" stroke="#a81800" stroke-width=".6"/><path d="M99.6 218.4L104.2 217.9L95.6 210.9L91.1 211.3Z" fill="#b81800" stroke="#b81800" stroke-width=".6"/><path d="M112.8 213.5L116.3 209.8L107.5 203.0L104.1 206.6Z" fill="#881800" stroke="#881800" stroke-width=".6"/><path d="M116.3 209.8L119.0 205.5L110.1 198.8L107.5 203.0Z" fill="#780800" stroke="#780800" stroke-width=".6"/><path d="M119.0 205.5L120.7 200.8L111.7 194.2L110.1 198.8Z" fill="#580800" stroke="#580800" stroke-width=".6"/><path d="M120.7 200.8L121.2 196.1L112.2 189.5L111.7 194.2Z" fill="#380800" stroke="#380800" stroke-width=".6"/></g><path d="M165.3 186.1L176.4 177.7L175.8 171.9L163.8 171.5L162.6 166.9L171.6 155.5L169.3 150.4L156.7 154.2L154.0 150.4L160.0 136.8L156.2 132.9L144.2 140.7L140.4 138.2L142.5 123.6L137.3 121.4L127.3 132.7L122.5 131.7L120.4 117.5L114.3 117.3L107.5 131.2L102.3 131.9L95.7 119.7L89.4 121.5L86.6 136.7L81.5 139.1L71.0 130.2L65.2 134.0L67.1 148.8L62.7 152.8L49.3 148.2L44.6 153.7L51.1 166.4L47.9 171.4L33.0 171.9L30.0 178.3L40.5 187.5L38.8 193.1L24.1 198.4L23.2 205.1L36.5 209.7L36.6 215.2L23.6 224.6L24.8 230.8L39.4 230.6L41.1 235.3L31.3 247.6L34.3 252.6L48.6 247.8L51.8 251.3L45.8 265.1L50.3 268.4L63.0 259.8L67.2 261.8L65.5 275.6L70.9 277.0L80.9 265.6L85.6 266.0L88.0 278.4L93.8 278.0L100.3 265.0L105.2 263.9L111.2 273.8L116.9 271.6L119.6 258.3L124.2 255.7L133.1 262.5L138.1 258.7L137.0 246.3L140.8 242.6L151.8 245.6L155.8 240.7L151.0 230.1L153.9 225.6L166.0 224.7L168.7 219.0L160.7 211.2L162.3 206.3L174.4 201.5L175.5 195.5L165.1 191.1ZM121.2 196.1L120.5 191.6L118.7 187.6L115.9 184.5L112.2 182.4L108.0 181.4L103.4 181.8L98.8 183.4L94.5 186.2L90.9 189.9L88.1 194.3L86.4 199.2L86.0 204.0L86.7 208.6L88.7 212.5L91.6 215.6L95.3 217.6L99.6 218.4L104.2 217.9L108.7 216.2L112.8 213.5L116.3 209.8L119.0 205.5L120.7 200.8Z" fill="#c11800" fill-rule="evenodd"/><path d="M139.2 80.3L127.0 75.3L122.2 73.1L134.3 78.1ZM120.5 38.0L114.5 34.9L109.7 33.1L115.7 36.1ZM85.4 50.4L81.0 53.2L76.5 51.1L80.9 48.4Z" fill="#2d2dcd" stroke="#2d2dcd" stroke-width=".6"/><path d="M134.1 52.7L120.5 57.0L115.7 55.0L129.2 50.8ZM104.7 47.3L99.9 46.8L95.3 44.9L100.0 45.4ZM94.2 32.6L87.2 34.2L82.6 32.4L89.6 30.8ZM68.0 70.4L53.0 73.4L48.8 71.2L63.7 68.2Z" fill="#2d2dd7" stroke="#2d2dd7" stroke-width=".6"/><path d="M114.5 34.9L104.7 47.3L100.0 45.4L109.7 33.1ZM68.0 46.1L62.9 52.0L58.6 49.9L63.7 44.1Z" fill="#2323a5" stroke="#2323a5" stroke-width=".6"/><path d="M87.2 34.2L85.4 50.4L80.9 48.4L82.6 32.4Z" fill="#0f0f41" stroke="#0f0f41" stroke-width=".6"/><path d="M81.0 53.2L68.0 46.1L63.7 44.1L76.5 51.1Z" fill="#2d2dc3" stroke="#2d2dc3" stroke-width=".6"/><path d="M62.9 52.0L70.3 65.4L65.9 63.2L58.6 49.9ZM65.6 86.4L66.4 91.6L62.1 89.1L61.3 84.0ZM55.3 103.2L58.6 109.6L54.4 106.9L51.2 100.6ZM73.0 104.8L76.5 108.1L72.2 105.5L68.7 102.2ZM94.0 113.8L99.6 126.7L95.1 124.0L89.6 111.2Z" fill="#0f0f37" stroke="#0f0f37" stroke-width=".6"/><path d="M70.3 65.4L68.0 70.4L63.7 68.2L65.9 63.2Z" fill="#19197d" stroke="#19197d" stroke-width=".6"/><path d="M53.0 73.4L51.9 81.2L47.7 78.8L48.8 71.2Z" fill="#0f0f4b" stroke="#0f0f4b" stroke-width=".6"/><path d="M66.4 91.6L55.3 103.2L51.2 100.6L62.1 89.1Z" fill="#2323af" stroke="#2323af" stroke-width=".6"/><path d="M76.5 108.1L73.4 123.4L69.2 120.6L72.2 105.5Z" fill="#0f0f55" stroke="#0f0f55" stroke-width=".6"/><clipPath id="hc15"><path d="M120.8 77.3L119.9 70.7L117.4 64.8L113.6 59.8L108.5 56.3L102.6 54.4L96.3 54.2L89.9 55.9L84.0 59.4L79.0 64.3L75.2 70.4L72.9 77.2L72.3 84.2L73.4 91.0L76.1 96.9L80.2 101.7L85.4 105.0L91.3 106.7L97.6 106.6L103.7 104.7L109.4 101.2L114.2 96.4L117.8 90.6L120.1 84.1Z"/></clipPath><g clip-path="url(#hc15)"><path d="M120.8 77.3L119.9 70.7L117.4 64.8L113.6 59.8L108.5 56.3L102.6 54.4L96.3 54.2L89.9 55.9L84.0 59.4L79.0 64.3L75.2 70.4L72.9 77.2L72.3 84.2L73.4 91.0L76.1 96.9L80.2 101.7L85.4 105.0L91.3 106.7L97.6 106.6L103.7 104.7L109.4 101.2L114.2 96.4L117.8 90.6L120.1 84.1Z" fill="#000"/><path d="M120.8 77.3L119.9 70.7L115.1 68.6L116.0 75.1ZM119.9 70.7L117.4 64.8L112.7 62.7L115.1 68.6ZM117.4 64.8L113.6 59.8L108.8 57.8L112.7 62.7ZM113.6 59.8L108.5 56.3L103.8 54.3L108.8 57.8ZM120.1 84.1L120.8 77.3L116.0 75.1L115.3 81.8Z" fill="#080838" stroke="#080838" stroke-width=".6"/><path d="M85.4 105.0L91.3 106.7L86.9 104.1L81.0 102.5ZM91.3 106.7L97.6 106.6L93.1 104.0L86.9 104.1ZM97.6 106.6L103.7 104.7L99.2 102.2L93.1 104.0Z" fill="#2828d8" stroke="#2828d8" stroke-width=".6"/><path d="M103.7 104.7L109.4 101.2L104.8 98.8L99.2 102.2Z" fill="#2828c8" stroke="#2828c8" stroke-width=".6"/><path d="M109.4 101.2L114.2 96.4L109.5 94.0L104.8 98.8Z" fill="#2828b8" stroke="#2828b8" stroke-width=".6"/><path d="M114.2 96.4L117.8 90.6L113.1 88.2L109.5 94.0Z" fill="#181898" stroke="#181898" stroke-width=".6"/><path d="M117.8 90.6L120.1 84.1L115.3 81.8L113.1 88.2Z" fill="#181868" stroke="#181868" stroke-width=".6"/></g><path d="M124.4 90.5L137.9 87.5L139.2 80.3L127.0 75.3L126.4 70.2L136.9 59.1L134.1 52.7L120.5 57.0L117.2 53.5L120.5 38.0L114.5 34.9L104.7 47.3L99.9 46.8L94.2 32.6L87.2 34.2L85.4 50.4L81.0 53.2L68.0 46.1L62.9 52.0L70.3 65.4L68.0 70.4L53.0 73.4L51.9 81.2L65.6 86.4L66.4 91.6L55.3 103.2L58.6 109.6L73.0 104.8L76.5 108.1L73.4 123.4L79.6 125.9L89.3 113.5L94.0 113.8L99.6 126.7L106.2 124.7L108.0 109.8L112.2 107.0L123.8 113.0L128.6 107.4L122.2 95.3ZM120.8 77.3L119.9 70.7L117.4 64.8L113.6 59.8L108.5 56.3L102.6 54.4L96.3 54.2L89.9 55.9L84.0 59.4L79.0 64.3L75.2 70.4L72.9 77.2L72.3 84.2L73.4 91.0L76.1 96.9L80.2 101.7L85.4 105.0L91.3 106.7L97.6 106.6L103.7 104.7L109.4 101.2L114.2 96.4L117.8 90.6L120.1 84.1Z" fill="#3030f2" fill-rule="evenodd"/></svg></div>
<div class="a" style="left:1340px;top:1079px;width:433px;height:1px;background:#77736f"></div>
<div class="a win" style="left:1364px;top:28px;width:556px;height:575px;background:#f6f5f4"><div class="tbar" style="background:linear-gradient(180deg,#d6d4d1 0,#e9e8e6 6px,#f3f2f1 14px,#f6f5f4 24px)"></div><div class="wi" style="left:5px;top:5px"></div><div class="ttl in" style="left:0;width:508px">/usr/bin/latency-histogram</div><svg class="a" style="left:0;top:0" width="556" height="28"><path d="M490.3 17.5l4.2 -4.6l4.2 4.6" fill="none" stroke="#929290" stroke-width="2.4"/><path d="M513.0 18.5h9" fill="none" stroke="#929290" stroke-width="2.4"/><path d="M536.5 10.5l8 8m0 -8l-8 8" fill="none" stroke="#929290" stroke-width="2.4"/></svg><div class="a" style="left:4px;top:28px;width:547px;height:543px;background:#d9d9d9"></div></div><div class="tk" style="left:1370px;top:59px;letter-spacing:-.1px">29Jan2026 debian user</div><div class="tk" style="left:1370px;top:80px;letter-spacing:-.09px"> x86_64  6.12.57+deb13-rt-amd64  2.9.8  DISPLAY=:0.0</div><div class="tk" style="left:1370px;top:101px"> 16 cores  no_isolcpus   AuthenticAMD  AMD Ryzen 7 5825U with Radeon Graphics</div><div class="a" style="left:1399px;top:119px;width:484px;height:456px;border:1px solid;border-color:#828282 #fff #fff #828282;background:#d9d9d9"></div><div class="a" style="left:1400px;top:120px;width:482px;height:454px;border:1px solid;border-color:#fff #828282 #828282 #fff"></div><div class="a" style="left:1400px;top:120px;width:482px;height:454px"><svg id="plot" width="482" height="454" viewBox="1400 120 482 454"><rect x="1440" y="141" width="437" height="338" fill="#f0fff0"/><path d="M1440 478.500H1876.500V141" stroke="#fbfffb" stroke-width="1" fill="none"/><path d="M1441 451.5H1876M1441 440.5H1876M1441 433.5H1876M1441 427.5H1876M1441 422.5H1876M1441 418.5H1876M1441 415.5H1876M1441 412.5H1876M1441 409.5H1876M1441 391.5H1876M1441 380.5H1876M1441 373.5H1876M1441 367.5H1876M1441 362.5H1876M1441 358.5H1876M1441 354.5H1876M1441 351.5H1876M1441 348.5H1876M1441 330.5H1876M1441 320.5H1876M1441 312.5H1876M1441 306.5H1876M1441 301.5H1876M1441 297.5H1876M1441 294.5H1876M1441 291.5H1876M1441 288.5H1876M1441 270.5H1876M1441 259.5H1876M1441 252.5H1876M1441 246.5H1876M1441 241.5H1876M1441 237.5H1876M1441 234.5H1876M1441 230.5H1876M1441 228.5H1876M1441 210.5H1876M1441 199.5H1876M1441 191.5H1876M1441 185.5H1876M1441 181.5H1876M1441 177.5H1876M1441 173.5H1876M1441 170.5H1876M1441 167.5H1876" stroke="#9a9a9a" stroke-width="1" stroke-dasharray="4 1.5 1 1.5" fill="none"/><path d="M1454 469.3v-2h2v2zM1458 469.3v-2h2v2zM1459 469.3v-2h2v2zM1473 469.3v-2h2v2zM1478 469.3v-2h2v2zM1503 469.3v-2h2v2zM1533 469.3V432.9h1V469.3zM1537 469.3V440.5h1V469.3zM1541 469.3V451.1h1V469.3zM1542 469.3V451.1h1V469.3zM1543 469.3V451.1h1V469.3zM1544 469.3V451.1h1V469.3zM1548 469.3V451.1h1V469.3zM1549 469.3V451.1h1V469.3zM1550 469.3V451.1h1V469.3zM1551 469.3V451.1h1V469.3zM1555 469.3V451.1h1V469.3zM1556 469.3V451.1h1V469.3zM1557 469.3V451.1h1V469.3zM1558 469.3V440.5h1V469.3zM1559 469.3V440.5h1V469.3zM1560 469.3V451.1h1V469.3zM1561 469.3V432.9h1V469.3zM1562 469.3V432.9h1V469.3zM1563 469.3V451.1h1V469.3zM1564 469.3V418.3h1V469.3zM1565 469.3V418.3h1V469.3zM1566 469.3V432.9h1V469.3zM1567 469.3V432.9h1V469.3zM1568 469.3V440.5h1V469.3zM1569 469.3V440.5h1V469.3zM1570 469.3V440.5h1V469.3zM1571 469.3V451.1h1V469.3zM1572 469.3V427.1h1V469.3zM1573 469.3V427.1h1V469.3zM1574 469.3V427.1h1V469.3zM1575 469.3V427.1h1V469.3zM1576 469.3V440.5h1V469.3zM1577 469.3V440.5h1V469.3zM1578 469.3V432.9h1V469.3zM1579 469.3V432.9h1V469.3zM1580 469.3V440.5h1V469.3zM1581 469.3V427.1h1V469.3zM1582 469.3V427.1h1V469.3zM1583 469.3V411.7h1V469.3zM1584 469.3V418.3h1V469.3zM1585 469.3V418.3h1V469.3zM1586 469.3V408.9h1V469.3zM1587 469.3V408.9h1V469.3zM1588 469.3V411.7h1V469.3zM1589 469.3V411.7h1V469.3zM1590 469.3V418.3h1V469.3zM1591 469.3V400.1h1V469.3zM1592 469.3V400.1h1V469.3zM1593 469.3V400.1h1V469.3zM1594 469.3V404.1h1V469.3zM1595 469.3V396.6h1V469.3zM1596 469.3V396.6h1V469.3zM1597 469.3V396.6h1V469.3zM1598 469.3V388.2h1V469.3zM1599 469.3V388.2h1V469.3zM1600 469.3V395.0h1V469.3zM1601 469.3V384.9h1V469.3zM1602 469.3V389.4h1V469.3zM1603 469.3V379.2h1V469.3zM1604 469.3V384.9h1V469.3zM1605 469.3V379.5h1V469.3zM1606 469.3V375.0h1V469.3zM1607 469.3V374.5h1V469.3zM1608 469.3V372.9h1V469.3zM1609 469.3V369.8h1V469.3zM1610 469.3V366.2h1V469.3zM1611 469.3V364.4h1V469.3zM1612 469.3V364.0h1V469.3zM1613 469.3V362.3h1V469.3zM1614 469.3V357.8h1V469.3zM1615 469.3V356.7h1V469.3zM1616 469.3V354.2h1V469.3zM1617 469.3V354.1h1V469.3zM1618 469.3V352.1h1V469.3zM1619 469.3V348.0h1V469.3zM1620 469.3V344.8h1V469.3zM1621 469.3V341.9h1V469.3zM1622 469.3V335.2h1V469.3zM1623 469.3V332.1h1V469.3zM1624 469.3V327.5h1V469.3zM1625 469.3V325.8h1V469.3zM1626 469.3V319.2h1V469.3zM1627 469.3V316.3h1V469.3zM1628 469.3V308.3h1V469.3zM1629 469.3V304.1h1V469.3zM1630 469.3V299.7h1V469.3zM1631 469.3V295.0h1V469.3zM1632 469.3V289.9h1V469.3zM1633 469.3V288.0h1V469.3zM1634 469.3V284.5h1V469.3zM1635 469.3V279.3h1V469.3zM1636 469.3V276.2h1V469.3zM1637 469.3V272.7h1V469.3zM1638 469.3V268.6h1V469.3zM1639 469.3V265.0h1V469.3zM1640 469.3V260.5h1V469.3zM1641 469.3V256.2h1V469.3zM1642 469.3V252.3h1V469.3zM1643 469.3V246.9h1V469.3zM1644 469.3V247.2h1V469.3zM1645 469.3V246.0h1V469.3zM1646 469.3V246.5h1V469.3zM1647 469.3V245.4h1V469.3zM1648 469.3V242.3h1V469.3zM1649 469.3V234.5h1V469.3zM1650 469.3V228.3h1V469.3zM1651 469.3V219.0h1V469.3zM1652 469.3V212.5h1V469.3zM1653 469.3V206.6h1V469.3zM1654 469.3V196.3h1V469.3zM1655 469.3V179.2h1V469.3zM1656 469.3V170.9h1V469.3zM1657 469.3V146.4h1V469.3zM1658 469.3V147.6h1V469.3zM1659 469.3V166.8h1V469.3zM1660 469.3V179.5h1V469.3zM1661 469.3V190.0h1V469.3zM1662 469.3V198.8h1V469.3zM1663 469.3V207.1h1V469.3zM1664 469.3V215.1h1V469.3zM1665 469.3V225.9h1V469.3zM1666 469.3V233.2h1V469.3zM1667 469.3V242.4h1V469.3zM1668 469.3V251.6h1V469.3zM1669 469.3V254.9h1V469.3zM1670 469.3V255.6h1V469.3zM1671 469.3V257.0h1V469.3zM1672 469.3V257.3h1V469.3zM1673 469.3V258.0h1V469.3zM1674 469.3V257.9h1V469.3zM1675 469.3V262.0h1V469.3zM1676 469.3V265.0h1V469.3zM1677 469.3V267.9h1V469.3zM1678 469.3V268.1h1V469.3zM1679 469.3V270.7h1V469.3zM1680 469.3V273.9h1V469.3zM1681 469.3V277.8h1V469.3zM1682 469.3V280.5h1V469.3zM1683 469.3V283.0h1V469.3zM1684 469.3V285.1h1V469.3zM1685 469.3V288.7h1V469.3zM1686 469.3V290.4h1V469.3zM1687 469.3V293.7h1V469.3zM1688 469.3V294.1h1V469.3zM1689 469.3V296.7h1V469.3zM1690 469.3V300.7h1V469.3zM1691 469.3V305.2h1V469.3zM1692 469.3V306.5h1V469.3zM1693 469.3V312.1h1V469.3zM1694 469.3V315.4h1V469.3zM1695 469.3V320.2h1V469.3zM1696 469.3V322.4h1V469.3zM1697 469.3V325.7h1V469.3zM1698 469.3V329.1h1V469.3zM1699 469.3V333.6h1V469.3zM1700 469.3V336.2h1V469.3zM1701 469.3V341.4h1V469.3zM1702 469.3V344.1h1V469.3zM1703 469.3V348.2h1V469.3zM1704 469.3V349.8h1V469.3zM1705 469.3V352.7h1V469.3zM1706 469.3V354.5h1V469.3zM1707 469.3V355.4h1V469.3zM1708 469.3V357.3h1V469.3zM1709 469.3V358.0h1V469.3zM1710 469.3V359.9h1V469.3zM1711 469.3V361.0h1V469.3zM1712 469.3V363.0h1V469.3zM1713 469.3V364.6h1V469.3zM1714 469.3V365.9h1V469.3zM1715 469.3V369.2h1V469.3zM1716 469.3V371.1h1V469.3zM1717 469.3V370.9h1V469.3zM1718 469.3V375.2h1V469.3zM1719 469.3V375.2h1V469.3zM1720 469.3V377.2h1V469.3zM1721 469.3V381.0h1V469.3zM1722 469.3V381.0h1V469.3zM1723 469.3V381.0h1V469.3zM1724 469.3V382.8h1V469.3zM1725 469.3V382.8h1V469.3zM1726 469.3V382.8h1V469.3zM1727 469.3V385.9h1V469.3zM1728 469.3V400.1h1V469.3zM1729 469.3V400.1h1V469.3zM1730 469.3V393.5h1V469.3zM1731 469.3V393.5h1V469.3zM1732 469.3V393.5h1V469.3zM1733 469.3V406.4h1V469.3zM1734 469.3V396.6h1V469.3zM1735 469.3V396.6h1V469.3zM1736 469.3V402.0h1V469.3zM1737 469.3V402.0h1V469.3zM1738 469.3V422.3h1V469.3zM1739 469.3V422.3h1V469.3zM1740 469.3V422.3h1V469.3zM1741 469.3V414.8h1V469.3zM1742 469.3V414.8h1V469.3zM1743 469.3V427.1h1V469.3zM1744 469.3V427.1h1V469.3zM1745 469.3V427.1h1V469.3zM1746 469.3V422.3h1V469.3zM1747 469.3V422.3h1V469.3zM1748 469.3V427.1h1V469.3zM1749 469.3V418.3h1V469.3zM1750 469.3V418.3h1V469.3zM1751 469.3V432.9h1V469.3zM1752 469.3V432.9h1V469.3zM1753 469.3V422.3h1V469.3zM1754 469.3V422.3h1V469.3zM1755 469.3V422.3h1V469.3zM1756 469.3V427.1h1V469.3zM1757 469.3V451.1h1V469.3zM1758 469.3V451.1h1V469.3zM1759 469.3V451.1h1V469.3zM1760 469.3V451.1h1V469.3zM1761 469.3V422.3h1V469.3zM1762 469.3V422.3h1V469.3zM1763 469.3V451.1h1V469.3zM1764 469.3V451.1h1V469.3zM1765 469.3V451.1h1V469.3zM1767 469.3V451.1h1V469.3zM1768 469.3V451.1h1V469.3zM1769 469.3V451.1h1V469.3zM1772 469.3V451.1h1V469.3zM1773 469.3V451.1h1V469.3zM1780 469.3V451.1h1V469.3zM1781 469.3V451.1h1V469.3zM1782 469.3V451.1h1V469.3zM1788 469.3V440.5h1V469.3zM1789 469.3V440.5h1V469.3zM1806 469.3v-2h2v2zM1830 469.3v-2h2v2zM1860 469.3v-2h2v2z" fill="#0000ff"/><rect x="1449" y="468.700" width="419" height="1.300" fill="#0000ff"/><path d="M1450 469.500V440.500" stroke="#0000ff" stroke-width="2"/><path d="M1450 469.500V440.500" stroke="#ff2020" stroke-width="2" stroke-dasharray="3 3"/><path d="M1867 469.500V433" stroke="#0000ff" stroke-width="2"/><path d="M1867 469.500V433" stroke="#ff2020" stroke-width="2" stroke-dasharray="3 3"/><path d="M1439 141H1877M1440 140V480" stroke="#000" stroke-width="2" fill="none"/><path d="M1436.500 150V470M1428 469.5H1436.5M1431 451.5H1436.5M1431 440.5H1436.5M1431 433.5H1436.5M1431 427.5H1436.5M1431 422.5H1436.5M1431 418.5H1436.5M1431 415.5H1436.5M1431 412.5H1436.5M1428 409.5H1436.5M1431 391.5H1436.5M1431 380.5H1436.5M1431 373.5H1436.5M1431 367.5H1436.5M1431 362.5H1436.5M1431 358.5H1436.5M1431 354.5H1436.5M1431 351.5H1436.5M1428 348.5H1436.5M1431 330.5H1436.5M1431 320.5H1436.5M1431 312.5H1436.5M1431 306.5H1436.5M1431 301.5H1436.5M1431 297.5H1436.5M1431 294.5H1436.5M1431 291.5H1436.5M1428 288.5H1436.5M1431 270.5H1436.5M1431 259.5H1436.5M1431 252.5H1436.5M1431 246.5H1436.5M1431 241.5H1436.5M1431 237.5H1436.5M1431 234.5H1436.5M1431 230.5H1436.5M1428 228.5H1436.5M1431 210.5H1436.5M1431 199.5H1436.5M1431 191.5H1436.5M1431 185.5H1436.5M1431 181.5H1436.5M1431 177.5H1436.5M1431 173.5H1436.5M1431 170.5H1436.5M1428 167.5H1436.5" stroke="#000" stroke-width="1" fill="none"/><text x="1405" y="472.8" class="ax">1E0</text><text x="1405" y="412.4" class="ax">1E1</text><text x="1405" y="352.0" class="ax">1E2</text><text x="1405" y="291.6" class="ax">1E3</text><text x="1405" y="231.2" class="ax">1E4</text><text x="1405" y="170.8" class="ax">1E5</text><text x="1447.9" y="500" class="ax" text-anchor="middle">-20</text><text x="1552.9" y="500" class="ax" text-anchor="middle">-10</text><text x="1614.9" y="500" class="ax" text-anchor="middle">-4</text><text x="1635.9" y="500" class="ax" text-anchor="middle">-2</text><text x="1656.9" y="500" class="ax" text-anchor="middle">0</text><text x="1677.9" y="500" class="ax" text-anchor="middle">2</text><text x="1698.9" y="500" class="ax" text-anchor="middle">4</text><text x="1761.9" y="500" class="ax" text-anchor="middle">10</text><text x="1865.9" y="500" class="ax" text-anchor="middle">20</text><path d="M1449 482.600H1868M1449.5 482V491M1554.5 482V491M1616.5 482V491M1637.5 482V491M1658.5 482V491M1679.5 482V491M1700.5 482V491M1763.5 482V491M1867.5 482V491" stroke="#000" stroke-width="1.200" fill="none"/><text x="1658" y="133" class="ct" text-anchor="middle">Latency (µs) servo thread (1000.0 µs period, binsize=0.1 µs)</text></svg></div><div class="tk" style="left:1403px;top:509px">min (µs)</div><div class="ent" style="left:1460px;top:506px;width:76px">-72.1</div><div class="tk" style="left:1551px;top:509px">sdev (µs)</div><div class="ent" style="left:1614px;top:506px;width:76px">0.8</div><div class="tk" style="left:1743px;top:509px">max (µs)</div><div class="ent" style="left:1804px;top:506px;width:76px">68.8</div><div class="ent" style="left:1402px;top:529px;width:76px;color:#f00">3</div><div class="tk" style="left:1482px;top:532px">&lt;--off-chart neg bin ct</div><div class="tk" style="left:1657px;top:532px">off-chart pos bin ct--&gt;</div><div class="ent" style="left:1804px;top:529px;width:76px;color:#f00">4</div><div class="tk" style="left:1403px;top:555px">Display +/- bins:</div><div class="rad" style="left:1524.0px;top:556.5px"></div><div class="tk" style="left:1542.0px;top:555px">2</div><div class="rad" style="left:1562.5px;top:556.5px"></div><div class="tk" style="left:1580.5px;top:555px">4</div><div class="rad" style="left:1602.0px;top:556.5px"></div><div class="tk" style="left:1620.0px;top:555px">10</div><div class="rad" style="left:1648.5px;top:556.5px"></div><div class="tk" style="left:1666.5px;top:555px">20</div><div class="rad" style="left:1695.5px;top:556.5px"></div><div class="tk" style="left:1713.5px;top:555px">40</div><div class="rad" style="left:1742.5px;top:556.5px"></div><div class="tk" style="left:1760.5px;top:555px">100</div><div class="rad" style="left:1797.5px;top:556.5px"></div><div class="a" style="left:1801.0px;top:560px;width:4px;height:4px;border-radius:50%;background:#000"></div><div class="tk" style="left:1815.5px;top:555px">200</div><div class="btn" style="left:1370px;top:577px;width:40px">Reset</div><div class="a" style="left:1420px;top:581px;width:11px;height:11px;background:#fff;border:1px solid;border-color:#828282 #efefef #efefef #828282"></div><svg class="a" style="left:1420px;top:581px" width="11" height="11"><path d="M2.5 5.5l2 2.5l4-5.5" stroke="#000" stroke-width="1.6" fill="none"/></svg><div class="tk" style="left:1435px;top:580px">ylogscale</div><div class="btn" style="left:1520px;top:577px;width:75px">Screenshot</div><div class="btn" style="left:1634px;top:577px;width:61px">Glxgears</div><div class="tk" style="left:1699px;top:580px">18</div><div class="tk" style="left:1736px;top:580px">Elapsed Time:</div><div class="ent" style="left:1831px;top:577px;width:52px">847</div><div class="btn" style="left:1885px;top:577px;width:28px">Exit</div>
<div class="a win" style="left:0;top:28px;width:1346px;height:1031px"><div class="tbar"></div><svg class="a" style="left:6px;top:5px" width="20" height="18"><rect x=".5" y=".5" width="19" height="17" rx="1.5" fill="#22343f" stroke="#a9b4c4" stroke-width="1.6"/><path d="M3.5 4.5l5 2.5l-5 2.5" stroke="#fff" stroke-width="1.5" fill="none"/><path d="M10 12.5h5.5" stroke="#fff" stroke-width="1.8"/></svg><div class="ttl" style="left:0;width:1277px;top:7px">Terminal - user@debian: ~</div><svg class="a" style="left:0;top:0" width="1346" height="28"><path d="M1258.3 17.5l4.2 -4.6l4.2 4.6" fill="none" stroke="#2e3436" stroke-width="2.4"/><path d="M1281.0 18.5h9" fill="none" stroke="#2e3436" stroke-width="2.4"/><rect x="1304.7" y="10.7" width="7.6" height="7.6" fill="none" stroke="#2e3436" stroke-width="2.4"/><path d="M1327.5 10.5l8 8m0 -8l-8 8" fill="none" stroke="#2e3436" stroke-width="2.4"/></svg><div class="a" style="left:1px;top:28px;width:1344px;height:24px;background:#f6f5f4"></div><div class="t" style="left:13px;top:33px">File</div><div class="t" style="left:52px;top:33px">Edit</div><div class="t" style="left:93px;top:33px">View</div><div class="t" style="left:141px;top:33px">Terminal</div><div class="t" style="left:213px;top:33px">Tabs</div><div class="t" style="left:258px;top:33px">Help</div><div class="a" style="left:5px;top:52px;width:1337px;height:42px;background:#e1dedb;border-top:1px solid #d5d0cc"></div><div class="a" style="left:899px;top:53px;width:434px;height:41px;background:#ebe9e7;border-left:1px solid #d5d0cc;border-right:1px solid #d5d0cc"></div><div class="a" style="left:899px;top:90px;width:434px;height:4px;background:#3584e4"></div><div class="t" style="left:30px;top:65px;color:#ae0a0e">user@debian: ~</div><div class="t" style="left:473px;top:65px">user@debian: ~</div><div class="t" style="left:916px;top:65px">user@debian: ~</div><svg class="a" style="left:0;top:52px" width="1346" height="42"><path d="M422.5 17l7 7m0 -7l-7 7" stroke="#a9a7a4" stroke-width="2" fill="none"/><path d="M865.5 17l7 7m0 -7l-7 7" stroke="#a9a7a4" stroke-width="2" fill="none"/><path d="M1308.5 17l7 7m0 -7l-7 7" stroke="#a9a7a4" stroke-width="2" fill="none"/></svg><div class="a term"><div id="term"><div class="tr" style="top:1px"><u style="color:#556d59">╭─┐</u><b style="color:#b54040">¹</b><b style="color:#eeeeee">cpu</b><u style="color:#556d59">┌──┐</u><b style="color:#b54040">m</b><b style="color:#eeeeee">enu</b><u style="color:#556d59">┌┐</u><b style="color:#b54040">p</b><b style="color:#eeeeee">reset *</b><u style="color:#556d59">┌────────────────────────────────────┐</u><b style="color:#eeeeee">05:46:21</b><u style="color:#556d59">┌──────────────────────────────────────────────┐</u><b style="color:#b54040">- </b><b style="color:#eeeeee">2000ms </b><b style="color:#b54040">+</b><u style="color:#556d59">┌─╮</u></div><div class="tr" style="top:20px"><u style="color:#556d59">│                                                                                                                                  │</u></div><div class="tr" style="top:39px"><u style="color:#556d59">│                                                                 </u><u style="color:#3a3a3a">╭─┐</u><b style="color:#eeeeee">Ryzen 7 5825U</b><u style="color:#3a3a3a">┌──────────────────────────────────────┐</u><b style="color:#eeeeee">3.0 GHz</b><u style="color:#3a3a3a">┌╮</u><u style="color:#556d59">│</u></div><div class="tr" style="top:58px"><u style="color:#556d59">│                                                                 </u><u style="color:#3a3a3a">│</u><b style="color:#eeeeee">CPU </b><span style="color:#77ca9b">■</span><span style="color:#7bca99">■</span><span style="color:#7fc996">■</span><span style="color:#83c994">■</span><span style="color:#87c892">■</span><span style="color:#8bc890">■</span><span style="color:#90c78d">■</span><span style="color:#94c78b">■</span><span style="color:#98c689">■</span><span style="color:#9cc686">■</span><span style="color:#a0c584">■</span><span style="color:#a4c582">■</span><span style="color:#a8c47f">■</span><span style="color:#acc47d">■</span><span style="color:#b0c37b">■</span><span style="color:#b4c379">■</span><span style="color:#b9c276">■</span><span style="color:#bdc274">■</span><span style="color:#c1c172">■</span><span style="color:#c5c16f">■</span><span style="color:#c9c06d">■</span><span style="color:#cbbd6b">■</span><span style="color:#ccb86a">■</span><span style="color:#cdb268">■</span><span style="color:#ceac67">■</span><span style="color:#cfa765">■</span><span style="color:#d0a163">■</span><span style="color:#d09b62">■</span><span style="color:#d19660">■</span><span style="color:#d2905f">■</span><span style="color:#d38a5d">■</span><span style="color:#d4855c">■</span><span style="color:#d57f5a">■</span><span style="color:#d57958">■</span><span style="color:#d67457">■</span><span style="color:#d76e55">■</span><span style="color:#d86854">■</span><span style="color:#d96352">■</span><span style="color:#da5d51">■</span><span style="color:#da574f">■</span><span style="color:#404040">■■  </span><span style="color:#db534e">97</span><span style="color:#cccccc">%        </span><span style="color:#eeeeee">89°C</span><u style="color:#3a3a3a">│</u><u style="color:#556d59">│</u></div><div class="tr" style="top:77px"><u style="color:#556d59">│                                                                 </u><u style="color:#3a3a3a">│</u><span style="color:#cccccc">C0                         </span><span style="color:#dc4c4c">100</span><span style="color:#cccccc">%</span><u style="color:#3a3a3a">│</u><span style="color:#cccccc">C8                         </span><span style="color:#dc4c4c">100</span><span style="color:#cccccc">%</span><u style="color:#3a3a3a">│</u><u style="color:#556d59">│</u></div><div class="tr" style="top:96px"><u style="color:#556d59">│                                                                 </u><u style="color:#3a3a3a">│</u><span style="color:#cccccc">C1                          </span><span style="color:#da5a50">94</span><span style="color:#cccccc">%</span><u style="color:#3a3a3a">│</u><span style="color:#cccccc">C9                         </span><span style="color:#dc4c4c">100</span><span style="color:#cccccc">%</span><u style="color:#3a3a3a">│</u><u style="color:#556d59">│</u></div><div class="tr" style="top:115px"><u style="color:#556d59">│                                                                 </u><u style="color:#3a3a3a">│</u><span style="color:#cccccc">C2                          </span><span style="color:#d76c55">86</span><span style="color:#cccccc">%</span><u style="color:#3a3a3a">│</u><span style="color:#cccccc">C10                         </span><span style="color:#da5c50">93</span><span style="color:#cccccc">%</span><u style="color:#3a3a3a">│</u><u style="color:#556d59">│</u></div><div class="tr" style="top:134px"><u style="color:#556d59">│                                                                 </u><u style="color:#3a3a3a">│</u><span style="color:#cccccc">C3                          </span><span style="color:#db514d">98</span><span style="color:#cccccc">%</span><u style="color:#3a3a3a">│</u><span style="color:#cccccc">C11                        </span><span style="color:#dc4c4c">100</span><span style="color:#cccccc">%</span><u style="color:#3a3a3a">│</u><u style="color:#556d59">│</u></div><div class="tr" style="top:153px"><u style="color:#556d59">│                                                                 </u><u style="color:#3a3a3a">│</u><span style="color:#cccccc">C4                          </span><span style="color:#db514d">98</span><span style="color:#cccccc">%</span><u style="color:#3a3a3a">│</u><span style="color:#cccccc">C12                        </span><span style="color:#dc4c4c">100</span><span style="color:#cccccc">%</span><u style="color:#3a3a3a">│</u><u style="color:#556d59">│</u></div><div class="tr" style="top:172px"><u style="color:#556d59">│                                                                 </u><u style="color:#3a3a3a">│</u><span style="color:#cccccc">C5                         </span><span style="color:#dc4c4c">100</span><span style="color:#cccccc">%</span><u style="color:#3a3a3a">│</u><span style="color:#cccccc">C13                        </span><span style="color:#dc4c4c">100</span><span style="color:#cccccc">%</span><u style="color:#3a3a3a">│</u><u style="color:#556d59">│</u></div><div class="tr" style="top:191px"><u style="color:#556d59">│                                                                 </u><u style="color:#3a3a3a">│</u><span style="color:#cccccc">C6                         </span><span style="color:#dc4c4c">100</span><span style="color:#cccccc">%</span><u style="color:#3a3a3a">│</u><span style="color:#cccccc">C14                         </span><span style="color:#db514d">98</span><span style="color:#cccccc">%</span><u style="color:#3a3a3a">│</u><u style="color:#556d59">│</u></div><div class="tr" style="top:210px"><u style="color:#556d59">│                                                                 </u><u style="color:#3a3a3a">│</u><span style="color:#cccccc">C7                         </span><span style="color:#dc4c4c">100</span><span style="color:#cccccc">%</span><u style="color:#3a3a3a">│</u><span style="color:#cccccc">C15                         </span><span style="color:#d95f51">92</span><span style="color:#cccccc">%</span><u style="color:#3a3a3a">│</u><u style="color:#556d59">│</u></div><div class="tr" style="top:229px"><u style="color:#556d59">│                                                                 </u><u style="color:#3a3a3a">│                                </u><span style="color:#cccccc">Load AVG:   26.7   18.4   10.0 </span><u style="color:#3a3a3a">│</u><u style="color:#556d59">│</u></div><div class="tr" style="top:248px"><u style="color:#556d59">│                                                                 </u><u style="color:#3a3a3a">╰───────────────────────────────────────────────────────────────╯</u><u style="color:#556d59">│</u></div><div class="tr" style="top:267px"><u style="color:#556d59">│ </u><span style="color:#606060">up 00:20:51                                                                                                                      </span><u style="color:#556d59">│</u></div><div class="tr" style="top:286px"><u style="color:#556d59">╰──────────────────────────────────────────────────────────────────────────────────────────────────────────────────────────────────╯</u></div><div class="tr" style="top:305px"><u style="color:#6c6c4b">╭─┐</u><b style="color:#b54040">²</b><b style="color:#eeeeee">mem</b><u style="color:#6c6c4b">┌────────────────────┬─┐</u><b style="color:#b54040">d</b><b style="color:#eeeeee">isks</b><u style="color:#6c6c4b">┌────────────────┐</u><b style="color:#b54040">i</b><b style="color:#eeeeee">o</b><u style="color:#6c6c4b">┌─╮</u><u style="color:#805252">╭─┐</u><b style="color:#b54040">⁴</b><b style="color:#eeeeee">proc</b><u style="color:#805252">┌┐</u><span style="color:#b54040">f</span><span style="color:#cccccc">ilter</span><u style="color:#805252">┌───────────────┐</u><span style="color:#cccccc">per-</span><span style="color:#b54040">c</span><span style="color:#cccccc">ore</span><u style="color:#805252">┌┐</u><span style="color:#b54040">r</span><span style="color:#cccccc">everse</span><u style="color:#805252">┌┐</u><span style="color:#cccccc">tre</span><span style="color:#b54040">e</span><u style="color:#805252">┌┐</u><b style="color:#b54040">&lt; </b><b style="color:#eeeeee">cpu lazy </b><b style="color:#b54040">&gt;</b><u style="color:#805252">┌─╮</u></div><div class="tr" style="top:324px"><u style="color:#6c6c4b">│ </u><b style="color:#eeeeee">Total:           28.2 GiB </b><u style="color:#3a3a3a">├─</u><b style="color:#eeeeee">root</b><u style="color:#3a3a3a">───────────────</u><b style="color:#eeeeee">14.1</b><u style="color:#3a3a3a">─</u><b style="color:#eeeeee">GiB</b><u style="color:#3a3a3a">─</u><u style="color:#6c6c4b">┤</u><u style="color:#805252">│    </u><b style="color:#eeeeee">Pid: Program:         Command:             User:  MemB       Cpu% </b><span style="color:#eeeeee">↑</span><u style="color:#805252">│</u></div><div class="tr" style="top:343px"><u style="color:#6c6c4b">├</u><u style="color:#3a3a3a">─</u><span style="color:#cccccc">Used:</span><u style="color:#3a3a3a">────────────</u><span style="color:#cccccc">1.99</span><u style="color:#3a3a3a">─</u><span style="color:#cccccc">GiB</span><u style="color:#3a3a3a">─┤ </u><span style="color:#cccccc">Used:  2% </span><span style="color:#404040">■■■■■■■■  </span><span style="color:#cccccc">287 MiB </span><u style="color:#6c6c4b">│</u><u style="color:#805252">│    </u><span style="color:#cccccc">4395 </span><span style="color:#80d0a3">python3          </span><span style="color:#cccccc">python3 ./tease.py   user   </span><span style="color:#80d0a3">8.7M        6.2 </span><span style="color:#eeeeee">█</span><u style="color:#805252">│</u></div><div class="tr" style="top:362px"><u style="color:#6c6c4b">│   </u><span style="color:#cccccc">7%                      </span><u style="color:#3a3a3a">│ </u><span style="color:#cccccc">Free: 98% </span><span style="color:#57753a">■</span><span style="color:#769a53">■</span><span style="color:#96c06c">■</span><span style="color:#b5e685">■</span><span style="color:#bfec85">■</span><span style="color:#c8f285">■</span><span style="color:#d2f985">■</span><span style="color:#404040">■ </span><span style="color:#cccccc">13.8 GiB </span><u style="color:#6c6c4b">│</u><u style="color:#805252">│    </u><span style="color:#c7c7c7">4397 </span><span style="color:#80d0a3">python3          </span><span style="color:#c7c7c7">python3 ./tease.py   user   </span><span style="color:#7ecba0">8.9M        </span><span style="color:#80d0a3">6.1  </span><u style="color:#805252">│</u></div><div class="tr" style="top:381px"><u style="color:#6c6c4b">│                           </u><u style="color:#3a3a3a">│                             </u><u style="color:#6c6c4b">│</u><u style="color:#805252">│    </u><span style="color:#c3c3c3">4387 </span><span style="color:#80cfa2">python3          </span><span style="color:#c3c3c3">python3 ./tease.py   user   </span><span style="color:#7cc69c">8.7M        </span><span style="color:#80cfa2">6.1  </span><u style="color:#805252">│</u></div><div class="tr" style="top:400px"><u style="color:#6c6c4b">├</u><u style="color:#3a3a3a">─</u><span style="color:#cccccc">Available:</span><u style="color:#3a3a3a">───────</u><span style="color:#cccccc">26.3</span><u style="color:#3a3a3a">─</u><span style="color:#cccccc">GiB</span><u style="color:#3a3a3a">─├─</u><b style="color:#eeeeee">tmp</b><u style="color:#3a3a3a">────────────────</u><b style="color:#eeeeee">14.1</b><u style="color:#3a3a3a">─</u><b style="color:#eeeeee">GiB</b><u style="color:#3a3a3a">─</u><u style="color:#6c6c4b">┤</u><u style="color:#805252">│    </u><span style="color:#bebebe">4390 </span><span style="color:#7eca9f">python3          </span><span style="color:#bebebe">python3 ./tease.py   user   </span><span style="color:#7ac299">8.5M        </span><span style="color:#7eca9f">6.1  </span><u style="color:#805252">│</u></div><div class="tr" style="top:419px"><u style="color:#6c6c4b">│  </u><span style="color:#cccccc">93%                      </span><u style="color:#3a3a3a">│ </u><span style="color:#cccccc">Used:  0% </span><span style="color:#404040">■■■■■■■■ </span><span style="color:#cccccc">24.0 KiB </span><u style="color:#6c6c4b">│</u><u style="color:#805252">│    </u><span style="color:#b9b9b9">4402 </span><span style="color:#7bc69c">python3          </span><span style="color:#b9b9b9">python3 ./tease.py   user   </span><span style="color:#77bd96">8.8M        </span><span style="color:#7bc69c">6.2  </span><u style="color:#805252">│</u></div><div class="tr" style="top:438px"><u style="color:#6c6c4b">│                           </u><u style="color:#3a3a3a">│ </u><span style="color:#cccccc">Free:100% </span><span style="color:#57753a">■</span><span style="color:#769a53">■</span><span style="color:#96c06c">■</span><span style="color:#b5e685">■</span><span style="color:#bfec85">■</span><span style="color:#c8f285">■</span><span style="color:#d2f985">■</span><span style="color:#dcff85">■ </span><span style="color:#cccccc">14.1 GiB </span><u style="color:#6c6c4b">│</u><u style="color:#805252">│    </u><span style="color:#b5b5b5">4288 </span><span style="color:#79c098">python3          </span><span style="color:#b5b5b5">python3 ./tease.py   user   </span><span style="color:#75b892">8.5M        </span><span style="color:#79c098">5.7  </span><u style="color:#805252">│</u></div><div class="tr" style="top:457px"><u style="color:#6c6c4b">├</u><u style="color:#3a3a3a">─</u><span style="color:#cccccc">Cached:</span><u style="color:#3a3a3a">──────────</u><span style="color:#cccccc">1.43</span><u style="color:#3a3a3a">─</u><span style="color:#cccccc">GiB</span><u style="color:#3a3a3a">─┤                             </u><u style="color:#6c6c4b">│</u><u style="color:#805252">│    </u><span style="color:#b0b0b0">4690 </span><span style="color:#77bc95">python3          </span><span style="color:#b0b0b0">python3 ./tease.py   user   </span><span style="color:#73b38f">8.8M        </span><span style="color:#77bc95">6.2  </span><u style="color:#805252">│</u></div><div class="tr" style="top:476px"><u style="color:#6c6c4b">│   </u><span style="color:#cccccc">5%                      </span><u style="color:#3a3a3a">├─────────────────────────────</u><u style="color:#6c6c4b">┤</u><u style="color:#805252">│    </u><span style="color:#ababab">4384 </span><span style="color:#75b792">python3          </span><span style="color:#ababab">python3 ./tease.py   user   </span><span style="color:#71ae8c">8.8M        </span><span style="color:#75b792">6.1  </span><u style="color:#805252">│</u></div><div class="tr" style="top:495px"><u style="color:#6c6c4b">│                           </u><u style="color:#3a3a3a">│                             </u><u style="color:#6c6c4b">│</u><u style="color:#805252">│    </u><span style="color:#a7a7a7">4389 </span><span style="color:#73b28f">python3          </span><span style="color:#a7a7a7">python3 ./tease.py   user   </span><span style="color:#6faa89">8.8M        </span><span style="color:#73b28f">6.0  </span><u style="color:#805252">│</u></div><div class="tr" style="top:514px"><u style="color:#6c6c4b">├</u><u style="color:#3a3a3a">─</u><span style="color:#cccccc">Free:</span><u style="color:#3a3a3a">────────────</u><span style="color:#cccccc">25.3</span><u style="color:#3a3a3a">─</u><span style="color:#cccccc">GiB</span><u style="color:#3a3a3a">─┤                             </u><u style="color:#6c6c4b">│</u><u style="color:#805252">│    </u><span style="color:#a2a2a2">4392 </span><span style="color:#71ad8b">python3          </span><span style="color:#a2a2a2">python3 ./tease.py   user   </span><span style="color:#6da585">8.8M        </span><span style="color:#71ad8b">6.0  </span><u style="color:#805252">│</u></div><div class="tr" style="top:533px"><u style="color:#6c6c4b">│  </u><span style="color:#cccccc">90%                      </span><u style="color:#3a3a3a">│                             </u><u style="color:#6c6c4b">│</u><u style="color:#805252">│    </u><span style="color:#9d9d9d">4398 </span><span style="color:#6ea888">python3          </span><span style="color:#9d9d9d">python3 ./tease.py   user   </span><span style="color:#6ba082">8.7M        </span><span style="color:#6ea888">5.9  </span><u style="color:#805252">│</u></div><div class="tr" style="top:552px"><u style="color:#6c6c4b">│                           </u><u style="color:#3a3a3a">│                             </u><u style="color:#6c6c4b">│</u><u style="color:#805252">│    </u><span style="color:#999999">4687 </span><span style="color:#6da485">python3          </span><span style="color:#999999">python3 ./tease.py   user   </span><span style="color:#699b7f">8.7M        </span><span style="color:#6da485">6.2  </span><u style="color:#805252">│</u></div><div class="tr" style="top:571px"><u style="color:#6c6c4b">├</u><u style="color:#3a3a3a">───────────────────────────┤                             </u><u style="color:#6c6c4b">│</u><u style="color:#805252">│    </u><span style="color:#949494">4689 </span><span style="color:#6a9f81">python3          </span><span style="color:#949494">python3 ./tease.py   user   </span><span style="color:#66967b">8.8M        </span><span style="color:#6a9f81">6.1  </span><u style="color:#805252">│</u></div><div class="tr" style="top:590px"><u style="color:#6c6c4b">│                           </u><u style="color:#3a3a3a">│                             </u><u style="color:#6c6c4b">│</u><u style="color:#805252">│    </u><span style="color:#8f8f8f">4692 </span><span style="color:#689a7e">python3          </span><span style="color:#8f8f8f">python3 ./tease.py   user   </span><span style="color:#649278">8.9M        </span><span style="color:#689a7e">6.0  </span><u style="color:#805252">│</u></div><div class="tr" style="top:609px"><u style="color:#6c6c4b">│                           </u><u style="color:#3a3a3a">│                             </u><u style="color:#6c6c4b">│</u><u style="color:#805252">│    </u><span style="color:#8b8b8b">4695 </span><span style="color:#66967b">python3          </span><span style="color:#8b8b8b">python3 ./tease.py   user   </span><span style="color:#628d75">8.7M        </span><span style="color:#66967b">6.2  </span><u style="color:#805252">│</u></div><div class="tr" style="top:628px"><u style="color:#6c6c4b">╰───────────────────────────┴─────────────────────────────╯</u><u style="color:#805252">│    </u><span style="color:#868686">4906 </span><span style="color:#608872">xfce4-screensho  </span><span style="color:#868686">xfce4-screenshooter  user    </span><span style="color:#608872">38M        0.0  </span><u style="color:#805252">│</u></div><div class="tr" style="top:647px"><u style="color:#5c588d">╭─┐</u><b style="color:#b54040">³</b><b style="color:#eeeeee">net</b><u style="color:#5c588d">┌┐</u><b style="color:#eeeeee">192.168.3.44</b><u style="color:#5c588d">┌────┐</u><b style="color:#eeeeee">s</b><b style="color:#b54040">y</b><b style="color:#eeeeee">nc</b><u style="color:#5c588d">┌┐</u><b style="color:#b54040">a</b><b style="color:#eeeeee">uto</b><u style="color:#5c588d">┌┐</u><span style="color:#b54040">z</span><span style="color:#cccccc">ero</span><u style="color:#5c588d">┌┐</u><b style="color:#b54040">&lt;b </b><b style="color:#eeeeee">enp1s0 </b><b style="color:#b54040">n&gt;</b><u style="color:#5c588d">┌╮</u><u style="color:#805252">│    </u><span style="color:#818181">1651 </span><span style="color:#5f8670">Xorg             </span><span style="color:#818181">/usr/lib/xorg/Xorg : root   </span><span style="color:#5e836e">134M        </span><span style="color:#5f8670">2.0  </span><u style="color:#805252">│</u></div><div class="tr" style="top:666px"><u style="color:#5c588d">│</u><span style="color:#606060">10K                                                      </span><u style="color:#5c588d">│</u><u style="color:#805252">│    </u><span style="color:#7d7d7d">1802 </span><span style="color:#5c7f6b">xfwm4            </span><span style="color:#7d7d7d">xfwm4                user    </span><span style="color:#5c7e6b">39M        </span><span style="color:#5c7f6b">0.1  </span><u style="color:#805252">│</u></div><div class="tr" style="top:685px"><u style="color:#5c588d">│                                                         │</u><u style="color:#805252">│    </u><span style="color:#787878">2181 </span><span style="color:#5a7a68">xfce4-terminal   </span><span style="color:#787878">xfce4-terminal       user    </span><span style="color:#5a7a68">50M        0.4  </span><u style="color:#805252">│</u></div><div class="tr" style="top:704px"><u style="color:#5c588d">│                              </u><u style="color:#3a3a3a">╭─┐</u><b style="color:#eeeeee">download</b><u style="color:#3a3a3a">┌──────────────╮</u><u style="color:#5c588d">│</u><u style="color:#805252">│     </u><span style="color:#737373">467 </span><span style="color:#587564">irq/84-amdgpu                         </span><span style="color:#737373">root     </span><span style="color:#577564">0B        </span><span style="color:#587564">0.1  </span><u style="color:#805252">│</u></div><div class="tr" style="top:723px"><u style="color:#5c588d">│                              </u><u style="color:#3a3a3a">│</u><span style="color:#cccccc">▼ 155 Byte/s (1.21 Kibps)</span><u style="color:#3a3a3a">│</u><u style="color:#5c588d">│</u><u style="color:#805252">│    </u><span style="color:#6f6f6f">4231 </span><span style="color:#557061">kworker/u64:3-co                      </span><span style="color:#6f6f6f">root     </span><span style="color:#557061">0B        0.0  </span><u style="color:#805252">│</u></div><div class="tr" style="top:742px"><u style="color:#5c588d">│                              </u><u style="color:#3a3a3a">│</u><span style="color:#cccccc">▼ Top:       (2.80 Kibps)</span><u style="color:#3a3a3a">│</u><u style="color:#5c588d">│</u><u style="color:#805252">│    </u><span style="color:#6a6a6a">3062 </span><span style="color:#536b5e">latency-histogr  </span><span style="color:#6a6a6a">/usr/bin/tclsh /usr/ user    </span><span style="color:#536b5e">20M        0.0  </span><u style="color:#805252">│</u></div><div class="tr" style="top:761px"><u style="color:#5c588d">│                              </u><u style="color:#3a3a3a">│</u><span style="color:#cccccc">▼ Total:         30.6 MiB</span><u style="color:#3a3a3a">│</u><u style="color:#5c588d">│</u><u style="color:#805252">│    </u><span style="color:#656565">4858 </span><span style="color:#51665a">btop             </span><span style="color:#656565">btop                 user   </span><span style="color:#51665a">6.6M        0.0  </span><u style="color:#805252">│</u></div><div class="tr" style="top:780px"><u style="color:#5c588d">│                              </u><u style="color:#3a3a3a">│                         │</u><u style="color:#5c588d">│</u><u style="color:#805252">│    </u><span style="color:#616161">3085 </span><span style="color:#4f6257">glxgears         </span><span style="color:#616161">glxgears             user    </span><span style="color:#4f6257">76M        0.0  </span><u style="color:#805252">│</u></div><div class="tr" style="top:799px"><u style="color:#5c588d">│                              </u><u style="color:#3a3a3a">│</u><span style="color:#cccccc">▲ 174 Byte/s (1.35 Kibps)</span><u style="color:#3a3a3a">│</u><u style="color:#5c588d">│</u><u style="color:#805252">│    </u><span style="color:#5c5c5c">3189 </span><span style="color:#4d5d54">glxgears         </span><span style="color:#5c5c5c">glxgears             user    </span><span style="color:#4d5d54">74M        0.0  </span><u style="color:#805252">│</u></div><div class="tr" style="top:818px"><u style="color:#5c588d">│                              </u><u style="color:#3a3a3a">│</u><span style="color:#cccccc">▲ Top:       (1.35 Kibps)</span><u style="color:#3a3a3a">│</u><u style="color:#5c588d">│</u><u style="color:#805252">│    </u><span style="color:#575757">3120 </span><span style="color:#4b5850">glxgears         </span><span style="color:#575757">glxgears             user    </span><span style="color:#4b5850">75M        0.0  </span><u style="color:#805252">│</u></div><div class="tr" style="top:837px"><u style="color:#5c588d">│                              </u><u style="color:#3a3a3a">│</u><span style="color:#cccccc">▲ Total:         1.76 MiB</span><u style="color:#3a3a3a">│</u><u style="color:#5c588d">│</u><u style="color:#805252">│    </u><span style="color:#535353">3132 </span><span style="color:#49534d">glxgears         </span><span style="color:#535353">glxgears             user    </span><span style="color:#49534d">75M        0.0  </span><u style="color:#805252">│</u></div><div class="tr" style="top:856px"><u style="color:#5c588d">│                              </u><u style="color:#3a3a3a">╰─┘</u><b style="color:#eeeeee">upload</b><u style="color:#3a3a3a">└────────────────╯</u><u style="color:#5c588d">│</u><u style="color:#805252">│    </u><span style="color:#4e4e4e">3178 </span><span style="color:#464e4a">glxgears         </span><span style="color:#4e4e4e">glxgears             user    </span><span style="color:#464e4a">74M        0.0  </span><u style="color:#805252">│</u></div><div class="tr" style="top:875px"><u style="color:#5c588d">│                                                         │</u><u style="color:#805252">│    </u><span style="color:#494949">3109 </span><span style="color:#444a47">glxgears         </span><span style="color:#494949">glxgears             user    </span><span style="color:#444a47">75M        0.0  </span><u style="color:#805252">│</u></div><div class="tr" style="top:894px"><u style="color:#5c588d">│</u><span style="color:#606060">10K                                                      </span><u style="color:#5c588d">│</u><u style="color:#805252">│    </u><span style="color:#454545">3143 </span><span style="color:#424543">glxgears         </span><span style="color:#454545">glxgears             user    </span><span style="color:#424543">74M        0.0 </span><span style="color:#eeeeee">↓</span><u style="color:#805252">│</u></div><div class="tr" style="top:913px"><u style="color:#5c588d">╰─────────────────────────────────────────────────────────╯</u><u style="color:#805252">╰┘</u><span style="color:#555555">↑ </span><b style="color:#eeeeee">select </b><span style="color:#d03030">↓</span><u style="color:#805252">└┘</u><b style="color:#404040">info </b><span style="color:#555555">↵</span><u style="color:#805252">└┘</u><b style="color:#404040">terminate</b><u style="color:#805252">└┘</u><b style="color:#404040">kill</b><u style="color:#805252">└┘</u><b style="color:#404040">signals</b><u style="color:#805252">└──────────────────┘</u><b style="color:#eeeeee">0/442</b><u style="color:#805252">└╯</u></div><i class="mg" style="left:710px;top:62px;width:420px"></i><i class="mg" style="left:400px;top:347px;width:80px"></i><i class="mg" style="left:400px;top:366px;width:80px"></i><i class="mg" style="left:400px;top:423px;width:80px"></i><i class="mg" style="left:400px;top:442px;width:80px"></i></div><svg id="dots" width="1320" height="931" viewBox="6 123 1320 931"><pattern id="dp" x="6" y="123" width="10" height="19" patternUnits="userSpaceOnUse"><rect x="2.15" y="2.40" width="2.5" height="2.5" fill="#fff"/><rect x="2.15" y="6.85" width="2.5" height="2.5" fill="#fff"/><rect x="2.15" y="11.30" width="2.5" height="2.5" fill="#fff"/><rect x="2.15" y="15.75" width="2.5" height="2.5" fill="#fff"/><rect x="6.85" y="2.40" width="2.5" height="2.5" fill="#fff"/><rect x="6.85" y="6.85" width="2.5" height="2.5" fill="#fff"/><rect x="6.85" y="11.30" width="2.5" height="2.5" fill="#fff"/><rect x="6.85" y="15.75" width="2.5" height="2.5" fill="#fff"/></pattern><mask id="dm" maskUnits="userSpaceOnUse" x="6" y="123" width="1320" height="931"><rect x="6" y="123" width="1320" height="931" fill="url(#dp)"/></mask><g mask="url(#dm)"><rect x="601.75" y="147.90" width="65.25" height="14.50" fill="#dc4c4c"/><rect x="601.75" y="390.40" width="65.25" height="13.40" fill="#dc4c4c"/><rect x="601.75" y="162.40" width="65.25" height="19.00" fill="#d76d55"/><rect x="601.75" y="371.40" width="65.25" height="19.00" fill="#d76d55"/><rect x="601.75" y="181.40" width="65.25" height="19.00" fill="#d28e5e"/><rect x="601.75" y="352.40" width="65.25" height="19.00" fill="#d28e5e"/><rect x="601.75" y="200.40" width="65.25" height="19.00" fill="#cdaf67"/><rect x="601.75" y="333.40" width="65.25" height="19.00" fill="#cdaf67"/><rect x="601.75" y="219.40" width="65.25" height="19.00" fill="#bfc173"/><rect x="601.75" y="314.40" width="65.25" height="19.00" fill="#bfc173"/><rect x="601.75" y="238.40" width="65.25" height="19.00" fill="#a7c480"/><rect x="601.75" y="295.40" width="65.25" height="19.00" fill="#a7c480"/><rect x="601.75" y="257.40" width="65.25" height="19.00" fill="#8fc78e"/><rect x="601.75" y="276.40" width="65.25" height="19.00" fill="#8fc78e"/><rect x="597.00" y="251.80" width="4.75" height="5.60" fill="#a7c480"/><rect x="597.00" y="257.40" width="4.75" height="19.00" fill="#8fc78e"/><rect x="597.00" y="276.40" width="4.75" height="19.00" fill="#8fc78e"/><rect x="597.00" y="295.40" width="4.75" height="4.50" fill="#a7c480"/><rect x="1197.00" y="185.90" width="50.00" height="14.50" fill="#9a62e8"/><rect x="717.00" y="213.80" width="154.75" height="5.60" fill="#4a4a4a"/><rect x="871.75" y="213.80" width="0.00" height="5.60" fill="#dc4c4c"/><rect x="867.00" y="213.80" width="4.75" height="5.60" fill="#dc4c4c"/><rect x="871.75" y="200.40" width="65.25" height="19.00" fill="#dc4c4c"/><rect x="717.00" y="232.80" width="154.75" height="5.60" fill="#4a4a4a"/><rect x="871.75" y="232.80" width="0.00" height="5.60" fill="#dc4c4c"/><rect x="867.00" y="232.80" width="4.75" height="5.60" fill="#dc4c4c"/><rect x="871.75" y="219.40" width="65.25" height="19.00" fill="#dc4c4c"/><rect x="717.00" y="251.80" width="154.75" height="5.60" fill="#4a4a4a"/><rect x="871.75" y="251.80" width="0.00" height="5.60" fill="#dc4c4c"/><rect x="867.00" y="251.80" width="4.75" height="5.60" fill="#e0a55f"/><rect x="871.75" y="242.90" width="5.25" height="14.50" fill="#e0a55f"/><rect x="877.00" y="242.90" width="4.75" height="14.50" fill="#dc955a"/><rect x="881.75" y="242.90" width="5.25" height="14.50" fill="#dc955a"/><rect x="887.00" y="242.90" width="4.75" height="14.50" fill="#e2ad62"/><rect x="891.75" y="242.90" width="5.25" height="14.50" fill="#e2ad62"/><rect x="897.00" y="238.40" width="4.75" height="19.00" fill="#dc5f50"/><rect x="901.75" y="242.90" width="5.25" height="14.50" fill="#dc5f50"/><rect x="907.00" y="242.90" width="4.75" height="14.50" fill="#e2c46c"/><rect x="911.75" y="242.90" width="5.25" height="14.50" fill="#e2c46c"/><rect x="917.00" y="242.90" width="4.75" height="14.50" fill="#e2c46c"/><rect x="921.75" y="247.30" width="5.25" height="10.10" fill="#e2c46c"/><rect x="927.00" y="238.40" width="4.75" height="19.00" fill="#dc7656"/><rect x="931.75" y="238.40" width="5.25" height="19.00" fill="#dc7656"/><rect x="717.00" y="270.80" width="154.75" height="5.60" fill="#4a4a4a"/><rect x="871.75" y="270.80" width="0.00" height="5.60" fill="#dc4c4c"/><rect x="867.00" y="270.80" width="4.75" height="5.60" fill="#dc4c4c"/><rect x="871.75" y="257.40" width="65.25" height="19.00" fill="#dc4c4c"/><rect x="877.00" y="257.40" width="10.00" height="19.00" fill="#dc7052"/><rect x="907.00" y="257.40" width="20.00" height="19.00" fill="#dc6450"/><rect x="717.00" y="289.80" width="154.75" height="5.60" fill="#4a4a4a"/><rect x="871.75" y="289.80" width="0.00" height="5.60" fill="#dc4c4c"/><rect x="867.00" y="289.80" width="4.75" height="5.60" fill="#dc4c4c"/><rect x="871.75" y="276.40" width="65.25" height="19.00" fill="#dc4c4c"/><rect x="717.00" y="308.80" width="154.75" height="5.60" fill="#4a4a4a"/><rect x="871.75" y="308.80" width="0.00" height="5.60" fill="#dc4c4c"/><rect x="867.00" y="308.80" width="4.75" height="5.60" fill="#dc4c4c"/><rect x="871.75" y="295.40" width="65.25" height="19.00" fill="#dc4c4c"/><rect x="717.00" y="327.80" width="154.75" height="5.60" fill="#4a4a4a"/><rect x="871.75" y="327.80" width="0.00" height="5.60" fill="#dc4c4c"/><rect x="867.00" y="327.80" width="4.75" height="5.60" fill="#dc4c4c"/><rect x="871.75" y="314.40" width="65.25" height="19.00" fill="#dc4c4c"/><rect x="717.00" y="346.80" width="154.75" height="5.60" fill="#4a4a4a"/><rect x="871.75" y="346.80" width="0.00" height="5.60" fill="#dc4c4c"/><rect x="867.00" y="346.80" width="4.75" height="5.60" fill="#dc4c4c"/><rect x="871.75" y="333.40" width="65.25" height="19.00" fill="#dc4c4c"/><rect x="1037.00" y="213.80" width="154.75" height="5.60" fill="#4a4a4a"/><rect x="1191.75" y="213.80" width="0.00" height="5.60" fill="#dc4c4c"/><rect x="1187.00" y="213.80" width="4.75" height="5.60" fill="#dc4c4c"/><rect x="1191.75" y="200.40" width="65.25" height="19.00" fill="#dc4c4c"/><rect x="1037.00" y="232.80" width="154.75" height="5.60" fill="#4a4a4a"/><rect x="1191.75" y="232.80" width="0.00" height="5.60" fill="#dc4c4c"/><rect x="1187.00" y="232.80" width="4.75" height="5.60" fill="#dc4c4c"/><rect x="1191.75" y="219.40" width="65.25" height="19.00" fill="#dc4c4c"/><rect x="1037.00" y="251.80" width="154.75" height="5.60" fill="#4a4a4a"/><rect x="1191.75" y="251.80" width="0.00" height="5.60" fill="#dc4c4c"/><rect x="1187.00" y="251.80" width="4.75" height="5.60" fill="#dc4c4c"/><rect x="1191.75" y="238.40" width="65.25" height="19.00" fill="#dc4c4c"/><rect x="1037.00" y="270.80" width="154.75" height="5.60" fill="#4a4a4a"/><rect x="1191.75" y="270.80" width="0.00" height="5.60" fill="#dc4c4c"/><rect x="1187.00" y="270.80" width="4.75" height="5.60" fill="#dc4c4c"/><rect x="1191.75" y="257.40" width="65.25" height="19.00" fill="#dc4c4c"/><rect x="1037.00" y="289.80" width="154.75" height="5.60" fill="#4a4a4a"/><rect x="1191.75" y="289.80" width="0.00" height="5.60" fill="#dc4c4c"/><rect x="1187.00" y="289.80" width="4.75" height="5.60" fill="#dc4c4c"/><rect x="1191.75" y="276.40" width="65.25" height="19.00" fill="#dc4c4c"/><rect x="1037.00" y="308.80" width="154.75" height="5.60" fill="#4a4a4a"/><rect x="1191.75" y="308.80" width="0.00" height="5.60" fill="#dc4c4c"/><rect x="1187.00" y="308.80" width="4.75" height="5.60" fill="#dc4c4c"/><rect x="1191.75" y="295.40" width="65.25" height="19.00" fill="#dc4c4c"/><rect x="1037.00" y="327.80" width="154.75" height="5.60" fill="#4a4a4a"/><rect x="1191.75" y="327.80" width="0.00" height="5.60" fill="#dc4c4c"/><rect x="1187.00" y="327.80" width="4.75" height="5.60" fill="#dc4c4c"/><rect x="1191.75" y="314.40" width="65.25" height="19.00" fill="#dc4c4c"/><rect x="1037.00" y="346.80" width="154.75" height="5.60" fill="#4a4a4a"/><rect x="1191.75" y="346.80" width="0.00" height="5.60" fill="#dc4c4c"/><rect x="1187.00" y="346.80" width="4.75" height="5.60" fill="#dc4c4c"/><rect x="1191.75" y="333.40" width="65.25" height="19.00" fill="#dc4c4c"/><rect x="217.00" y="517.80" width="70.00" height="5.60" fill="#e05c6b"/><rect x="217.00" y="542.40" width="70.00" height="19.00" fill="#ffc030"/><rect x="217.00" y="561.40" width="70.00" height="19.00" fill="#f0c060"/><rect x="217.00" y="631.80" width="70.00" height="5.60" fill="#5fd8f5"/><rect x="217.00" y="660.90" width="70.00" height="14.50" fill="#cdf58a"/><rect x="217.00" y="675.40" width="70.00" height="19.00" fill="#9fcf70"/><rect x="247.00" y="897.80" width="70.00" height="5.60" fill="#5a4cc0"/><rect x="247.00" y="903.40" width="70.00" height="4.50" fill="#8a2a96"/><rect x="1197.00" y="479.80" width="50.00" height="5.60" fill="#80d0a3"/><rect x="1197.00" y="498.80" width="50.00" height="5.60" fill="#80d0a3"/><rect x="1197.00" y="517.80" width="50.00" height="5.60" fill="#80cfa2"/><rect x="1197.00" y="536.80" width="50.00" height="5.60" fill="#7eca9f"/><rect x="1197.00" y="555.80" width="50.00" height="5.60" fill="#7bc69c"/><rect x="1197.00" y="574.80" width="50.00" height="5.60" fill="#79c098"/><rect x="1197.00" y="593.80" width="50.00" height="5.60" fill="#77bc95"/><rect x="1197.00" y="612.80" width="50.00" height="5.60" fill="#75b792"/><rect x="1197.00" y="631.80" width="50.00" height="5.60" fill="#73b28f"/><rect x="1197.00" y="650.80" width="50.00" height="5.60" fill="#71ad8b"/><rect x="1197.00" y="669.80" width="50.00" height="5.60" fill="#6ea888"/><rect x="1197.00" y="688.80" width="50.00" height="5.60" fill="#6da485"/><rect x="1197.00" y="707.80" width="50.00" height="5.60" fill="#6a9f81"/><rect x="1197.00" y="726.80" width="50.00" height="5.60" fill="#689a7e"/><rect x="1197.00" y="745.80" width="50.00" height="5.60" fill="#66967b"/><rect x="1197.00" y="764.80" width="50.00" height="5.60" fill="#3c3c3c"/><rect x="1197.00" y="783.80" width="50.00" height="5.60" fill="#5f8670"/><rect x="1197.00" y="802.80" width="4.75" height="5.60" fill="#5c7f6b"/><rect x="1207.00" y="802.80" width="30.00" height="5.60" fill="#5c7f6b"/><rect x="1241.75" y="802.80" width="5.25" height="5.60" fill="#5c7f6b"/><rect x="1197.00" y="821.80" width="50.00" height="5.60" fill="#5a7a68"/><rect x="1197.00" y="840.80" width="50.00" height="5.60" fill="#587564"/><rect x="1201.75" y="859.80" width="5.25" height="5.60" fill="#383838"/><rect x="1211.75" y="859.80" width="35.25" height="5.60" fill="#383838"/><rect x="1197.00" y="878.80" width="50.00" height="5.60" fill="#373737"/><rect x="1197.00" y="897.80" width="50.00" height="5.60" fill="#363636"/><rect x="1197.00" y="916.80" width="50.00" height="5.60" fill="#363636"/><rect x="1197.00" y="935.80" width="50.00" height="5.60" fill="#353535"/><rect x="1197.00" y="954.80" width="50.00" height="5.60" fill="#343434"/><rect x="1197.00" y="973.80" width="50.00" height="5.60" fill="#333333"/><rect x="1197.00" y="992.80" width="50.00" height="5.60" fill="#323232"/><rect x="1197.00" y="1011.80" width="50.00" height="5.60" fill="#323232"/><rect x="1197.00" y="1030.80" width="50.00" height="5.60" fill="#313131"/><rect x="877.00" y="257.40" width="4.75" height="4.50" fill="#000"/><rect x="1217.00" y="276.40" width="4.75" height="4.50" fill="#000"/><rect x="1217.00" y="280.90" width="4.75" height="4.40" fill="#000"/></g></svg></div><div class="a" style="left:1327px;top:94px;width:15px;height:933px;background:#e9e7e5;border-left:1px solid #dddad7"></div><div class="a" style="left:1331px;top:97px;width:8px;height:927px;background:#aeafad;border-radius:4px"></div><div class="a" style="left:0;top:6px;width:1px;height:1025px;background:#8a8784"></div></div>
<div id="panel" class="a"><svg class="a" style="left:2px;top:4px" width="18" height="18"><path d="M2.500 2.500L13.500 15.500M13.500 2.500L2.500 15.500" stroke="#16a6e0" stroke-width="4.400" fill="none"/><path d="M0.500 5.800l3 1.200c1-1.200 2.600-1.600 4.400-1.400c1.300-.9 2.600-.9 3.200-.2c1.300 0 2.500 .8 2.700 2c-.4 1.200-1.300 1.800-2.300 1.800l-.7 2.200h-6.500c-1-.8-1.200-2.200-.8-3.400z" fill="#0a0a0a"/></svg><div class="t" style="left:20px;top:5px">Applications</div><div class="a" style="left:104px;top:8px;width:4px;height:10px;background:repeating-linear-gradient(180deg,#a9a7a4 0,#a9a7a4 1px,transparent 1px,transparent 3px)"></div><div class="a tb" style="left:110px;width:200px"><div class="t" style="left:28px">glxgears</div></div><div class="a tb" style="left:310px;width:200px"><div class="t" style="left:28px">/usr/bin/latency-histogr...</div></div><div class="a tb act" style="left:510px;width:200px"><div class="t" style="left:28px">Screenshot</div></div><div class="a tb" style="left:710px;width:200px"><div class="t" style="left:28px">Terminal - user@debian...</div></div><svg class="a" style="left:112px;top:3px" width="24" height="23"><path d="M10.500 2l8 8.500l-8 8.500l-8-8.500z" fill="#2e3436" stroke="#2e3436" stroke-width="2" stroke-linejoin="round"/><path d="M10.500 5.500l4.700 5l-4.700 5l-4.700-5z" fill="none" stroke="#f6f5f4" stroke-width="1.300"/><path d="M10.500 5.500v10M5.800 10.500h9.400" stroke="#f6f5f4" stroke-width="1.100"/><circle cx="15.500" cy="16.500" r="5.600" fill="#2e3436"/><text x="15.500" y="19.600" text-anchor="middle" style="font:bold 8.500px 'DejaVu Sans',sans-serif" fill="#fff">18</text></svg><svg class="a" style="left:314px;top:4px" width="18" height="18"><path d="M5 2c0-1.500 5-1.800 5.500 0l.8 3.500c1.800 2 2.700 5 2.200 8.500h-10c-.6-3.500 0-6.500 1.500-8.500z" fill="#2b2b2b"/><path d="M6.500 7c1-1 3-1 3.500 0l1 5.500c-1 1.500-4.500 1.500-5.500 0z" fill="#f2f2f2"/><path d="M7 3.800h2.500l-1.200 1.600z" fill="#f4b400"/><ellipse cx="4.600" cy="14.500" rx="3.300" ry="1.900" fill="#f4b400"/><ellipse cx="12.200" cy="14.500" rx="3.300" ry="1.900" fill="#f4b400"/></svg><svg class="a" style="left:514px;top:5px" width="18" height="18"><rect x=".7" y=".7" width="15.600" height="11.600" rx="1" fill="#19a8e4" stroke="#2c5a74" stroke-width="1.400"/><path d="M6 4l5 5m0-5l-5 5" stroke="#10202a" stroke-width="1.500"/><path d="M7 13v2h3v-2zM5 15.500h7" stroke="#9aa4aa" stroke-width="1.200" fill="#9aa4aa"/></svg><svg class="a" style="left:715px;top:6px" width="16" height="14"><rect x=".5" y=".5" width="13.500" height="12" rx="1" fill="#22343f" stroke="#8a98a4" stroke-width=".8"/><path d="M2.800 3.500l3 1.600l-3 1.600" stroke="#fff" stroke-width="1.100" fill="none"/><path d="M6.500 8.500h3.500" stroke="#fff" stroke-width="1.100"/></svg><div class="a" style="left:1428px;top:0;width:184px;height:26px;background:#aaa9a7"></div><div class="a" style="left:1428px;top:0;width:46px;height:26px;background:#b7b3af;border:1px solid #4f4d4b"></div><div class="a" style="left:1474px;top:0;width:1px;height:26px;background:#d9d7d4"></div><div class="a" style="left:1520px;top:0;width:1px;height:26px;background:#d9d7d4"></div><div class="a" style="left:1566px;top:0;width:1px;height:26px;background:#d9d7d4"></div><div class="a" style="left:1436px;top:4px;width:21px;height:15px;background:#22343f;border:1px solid #5a6a78"></div><svg class="a" style="left:1436px;top:4px" width="21" height="15"><path d="M3 4l4.500 2.500l-4.500 2.500" stroke="#fff" stroke-width="1.300" fill="none"/><path d="M4 12h6" stroke="#fff" stroke-width="1.200"/></svg><div class="a" style="left:1444px;top:10px;width:14px;height:7px;background:#c9c7c4;border:1px solid #4f4d4b"></div><div class="a" style="left:1459px;top:2px;width:13px;height:13px;background:#b5b3b1;border:1px solid #6f6d6b"></div><div class="a" style="left:1459px;top:16px;width:11px;height:8px;background:#a8a6a4;border:1px solid #4f4d4b"></div><svg class="a" style="left:1620px;top:2px" width="104" height="22"><path d="M3 6l8-4l13 8l-1 5l-8 3z" fill="#d8d8d6" stroke="#8a8a88" stroke-width="1"/><path d="M5 5.500l5-2.500l3 2l-5 2.500z" fill="#e8c850"/><path d="M18 15l6 4" stroke="#555" stroke-width="2"/><path d="M32 8.500h3l4-3.500v12l-4-3.500h-3z" fill="#2e3436"/><path d="M41.500 7.500c1.500 1.500 1.500 5.500 0 7M44 5c3 3 3 9 0 12" stroke="#2e3436" stroke-width="1.600" fill="none"/><rect x="61" y="6.500" width="9.500" height="12.500" rx="2" fill="none" stroke="#2e3436" stroke-width="1.900"/><rect x="63.500" y="4" width="4.500" height="2.500" fill="#2e3436"/><path d="M66.700 8.500l-2.700 4.500h2.200l-1 3.500l3.200-5h-2.200z" fill="#2e3436"/><path d="M92 4.500c-3.600 0-5 2.800-5 6c0 2.800-.8 3.800-1.800 5h13.600c-1-1.200-1.800-2.200-1.800-5c0-3.200-1.400-6-5-6z" fill="#2e3436"/><circle cx="92" cy="17.300" r="1.700" fill="#2e3436"/></svg><div class="t" style="left:1727px;top:1px;width:80px;text-align:center;font-size:11px;line-height:12px">2026-01-29
05:46</div><div class="t" style="left:1810px;top:5px">Debian Live user</div></div>
<svg class="a" style="left:1313px;top:689px" width="14" height="22"><path d="M1 1v16l4-3.500l3 6.500l2.500-1l-3-6.500h5z" fill="#000" stroke="#fff" stroke-width="1.200"/></svg>
</div></body></html>
